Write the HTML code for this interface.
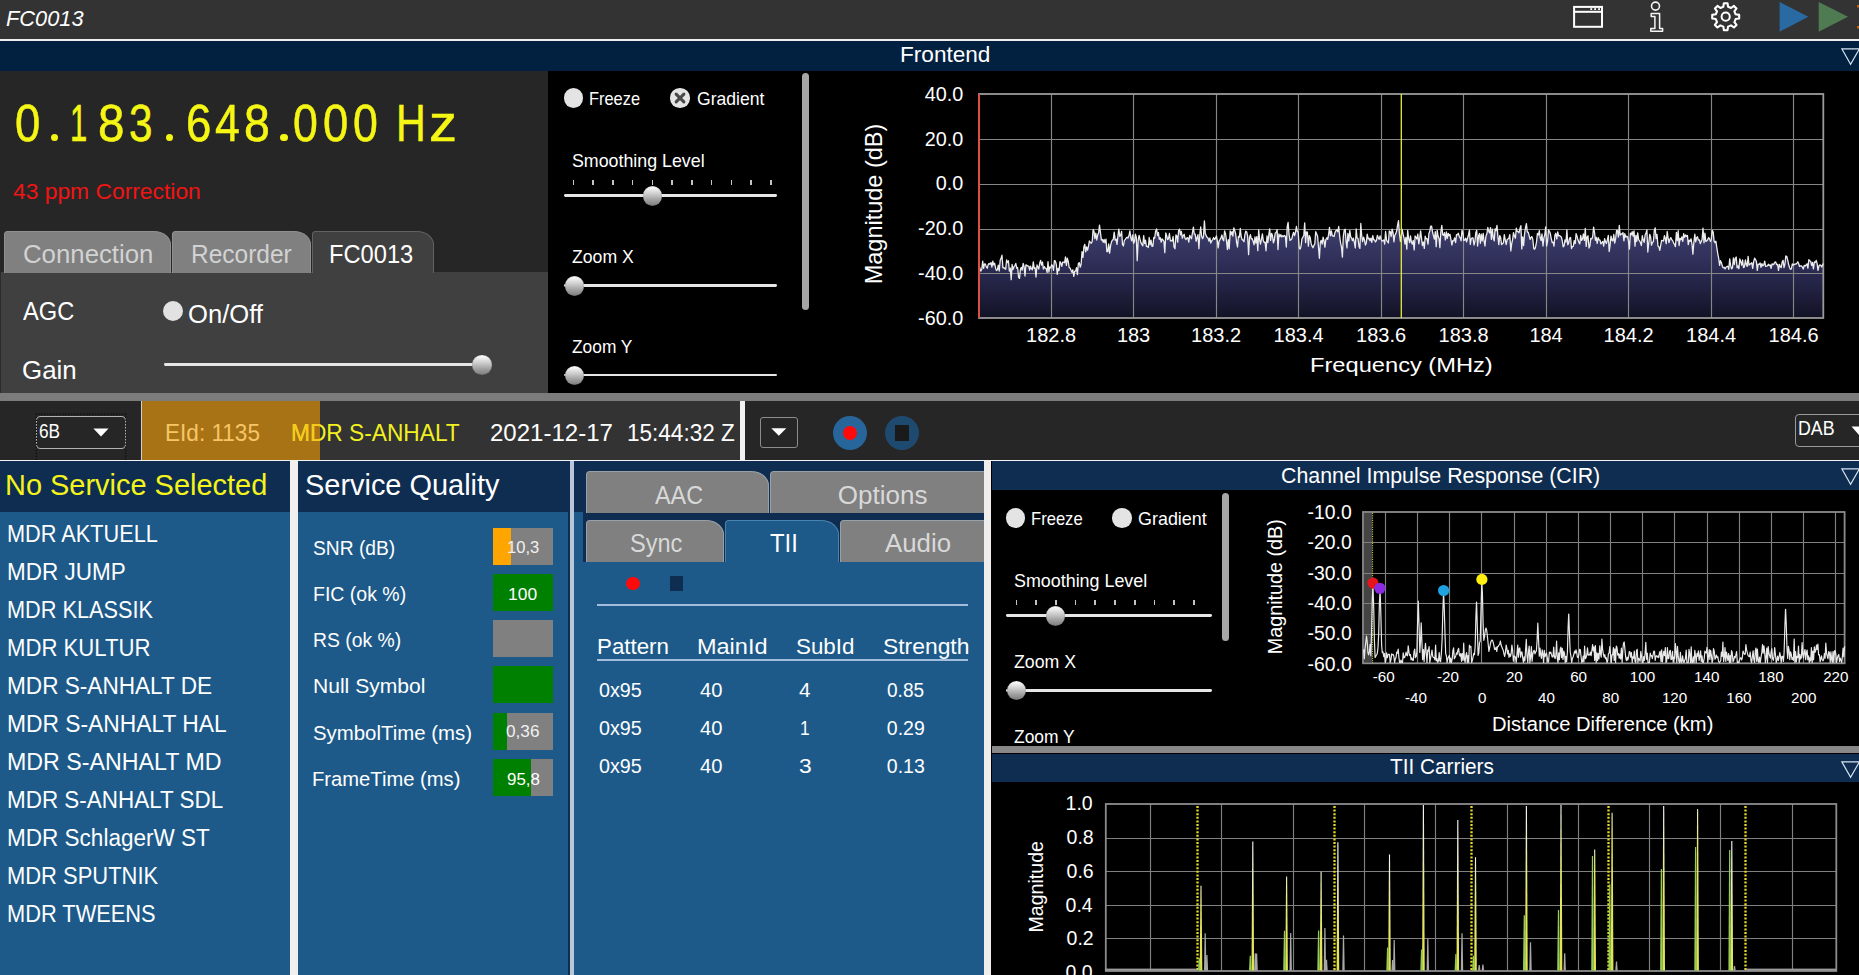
<!DOCTYPE html>
<html><head><meta charset="utf-8"><title>FC0013</title>
<style>
html,body{margin:0;padding:0;background:#000;overflow:hidden;}
body{width:1859px;height:975px;position:relative;font-family:"Liberation Sans", sans-serif;}
#app{position:absolute;left:0;top:0;width:1859px;height:975px;overflow:hidden;background:#000;}
.r{position:absolute;display:block;}
.t{position:absolute;white-space:pre;line-height:1;transform-origin:0 0;font-family:"Liberation Sans", sans-serif;}
.dg{-webkit-text-stroke:0.55px #f6f615;}
</style></head>
<body><div id="app">
<!-- layout -->
<div class="r" style="left:0px;top:0px;width:1859px;height:39.3px;background:#333333;"></div>
<div class="r" style="left:0px;top:39.3px;width:1859px;height:1.9px;background:#eeeeee;"></div>
<div class="r" style="left:0px;top:41.2px;width:1859px;height:29.4px;background:#02203f;"></div>
<div class="r" style="left:0px;top:70.6px;width:548.3px;height:202px;background:#262626;"></div>
<div class="r" style="left:0px;top:272.3px;width:548.3px;height:121px;background:#404040;"></div>
<div class="r" style="left:0px;top:393.2px;width:1859px;height:7.4px;background:#7c7c7c;"></div>
<div class="r" style="left:0px;top:400.6px;width:141.2px;height:59px;background:#262626;"></div>
<div class="r" style="left:141.2px;top:400.6px;width:178.6px;height:59px;background:#a87315;"></div>
<div class="r" style="left:319.8px;top:400.6px;width:420.4px;height:59px;background:#333333;"></div>
<div class="r" style="left:740.2px;top:400.6px;width:5.2px;height:59px;background:#f2f2f2;"></div>
<div class="r" style="left:745.4px;top:400.6px;width:1113.6px;height:59px;background:#262626;"></div>
<div class="r" style="left:0px;top:459.6px;width:1859px;height:1.6px;background:#f2f2f2;"></div>
<div class="r" style="left:0px;top:461.2px;width:290.3px;height:513.8px;background:#1d5a8a;"></div>
<div class="r" style="left:0px;top:461.2px;width:290.3px;height:50.4px;background:#0f2d50;"></div>
<div class="r" style="left:290.3px;top:461.2px;width:7.7px;height:513.8px;background:#f1f0ee;"></div>
<div class="r" style="left:298px;top:461.2px;width:272px;height:513.8px;background:#1d5a8a;"></div>
<div class="r" style="left:298px;top:461.2px;width:272px;height:50.4px;background:#0f2d50;"></div>
<div class="r" style="left:567.9px;top:461.2px;width:2.1px;height:513.8px;background:#0f2d50;"></div>
<div class="r" style="left:570px;top:461.2px;width:4px;height:513.8px;background:#bcc6da;"></div>
<div class="r" style="left:574px;top:461.2px;width:409.7px;height:513.8px;background:#1d5a8a;"></div>
<div class="r" style="left:574px;top:461.2px;width:409.7px;height:50.6px;background:#0f2d50;"></div>
<div class="r" style="left:583px;top:511.8px;width:400.7px;height:50px;background:#0f2d50;"></div>
<div class="r" style="left:983.7px;top:461.2px;width:7.8px;height:513.8px;background:#f0eeec;"></div>
<div class="r" style="left:991.5px;top:461.2px;width:867.5px;height:29.3px;background:#0f2d50;"></div>
<div class="r" style="left:991.5px;top:746.3px;width:867.5px;height:7.2px;background:#888888;"></div>
<div class="r" style="left:991.5px;top:753.5px;width:867.5px;height:28.8px;background:#0f2d50;"></div>
<!-- charts -->
<svg class="r" style="left:0;top:0" width="1859" height="400" viewBox="0 0 1859 400">
<defs><linearGradient id="sg" gradientUnits="userSpaceOnUse" x1="0" y1="228" x2="0" y2="318"><stop offset="0" stop-color="#3e3e6e"/><stop offset="0.45" stop-color="#2c2c54"/><stop offset="1" stop-color="#121226"/></linearGradient></defs>
<polygon points="979.0,318.0 979.0,265.7 979.9,268.2 980.8,271.1 981.8,269.3 982.7,261.1 983.6,268.4 984.5,263.8 985.4,264.2 986.4,267.1 987.3,268.2 988.2,264.7 989.1,263.4 990.0,264.2 991.0,262.5 991.9,267.1 992.8,261.2 993.7,264.9 994.6,263.2 995.6,268.2 996.5,270.5 997.4,269.8 998.3,265.2 999.2,271.0 1000.2,260.2 1001.1,258.0 1002.0,255.2 1002.9,267.8 1003.8,267.5 1004.8,268.7 1005.7,269.2 1006.6,260.0 1007.5,262.6 1008.4,260.8 1009.4,271.1 1010.3,268.2 1011.2,279.6 1012.1,264.5 1013.0,269.6 1014.0,266.8 1014.9,265.5 1015.8,263.4 1016.7,268.1 1017.6,267.5 1018.6,277.3 1019.5,278.4 1020.4,269.5 1021.3,267.3 1022.2,270.2 1023.2,263.4 1024.1,266.7 1025.0,276.0 1025.9,264.9 1026.8,265.4 1027.8,266.1 1028.7,266.2 1029.6,270.0 1030.5,266.2 1031.4,268.8 1032.4,269.7 1033.3,261.9 1034.2,268.4 1035.1,267.6 1036.0,277.0 1037.0,265.0 1037.9,267.0 1038.8,269.1 1039.7,263.4 1040.6,260.4 1041.6,265.1 1042.5,262.0 1043.4,269.1 1044.3,266.6 1045.2,268.1 1046.2,268.5 1047.1,272.4 1048.0,261.7 1048.9,272.0 1049.8,267.0 1050.8,267.9 1051.7,264.7 1052.6,265.9 1053.5,270.3 1054.4,260.6 1055.4,261.1 1056.3,264.5 1057.2,274.3 1058.1,268.4 1059.0,270.7 1060.0,261.6 1060.9,263.1 1061.8,266.3 1062.7,262.2 1063.6,262.2 1064.6,262.7 1065.5,256.9 1066.4,265.4 1067.3,258.1 1068.2,261.2 1069.2,267.7 1070.1,268.1 1071.0,270.3 1071.9,272.3 1072.8,269.8 1073.8,276.3 1074.7,271.1 1075.6,271.1 1076.5,267.6 1077.4,274.5 1078.4,263.3 1079.3,262.7 1080.2,267.2 1081.1,264.5 1082.0,251.7 1083.0,257.4 1083.9,246.8 1084.8,244.3 1085.7,251.8 1086.6,246.8 1087.6,250.2 1088.5,246.2 1089.4,240.9 1090.3,242.4 1091.2,243.3 1092.2,241.5 1093.1,229.5 1094.0,231.4 1094.9,238.7 1095.8,233.2 1096.8,240.0 1097.7,234.9 1098.6,233.0 1099.5,225.1 1100.4,232.1 1101.4,240.1 1102.3,239.4 1103.2,242.3 1104.1,239.4 1105.0,242.9 1106.0,239.2 1106.9,251.6 1107.8,251.7 1108.7,243.9 1109.6,253.2 1110.6,245.4 1111.5,241.8 1112.4,240.1 1113.3,239.5 1114.2,232.2 1115.2,240.2 1116.1,239.1 1117.0,244.4 1117.9,236.2 1118.8,229.2 1119.8,236.4 1120.7,235.4 1121.6,231.3 1122.5,244.4 1123.4,246.0 1124.4,240.4 1125.3,239.4 1126.2,238.1 1127.1,237.3 1128.0,238.1 1129.0,235.5 1129.9,230.8 1130.8,237.9 1131.7,240.9 1132.6,234.9 1133.6,243.3 1134.5,241.4 1135.4,234.1 1136.3,237.1 1137.2,260.7 1138.2,240.0 1139.1,235.5 1140.0,239.2 1140.9,242.6 1141.8,244.3 1142.8,245.9 1143.7,235.6 1144.6,243.6 1145.5,240.1 1146.4,246.3 1147.4,246.4 1148.3,247.5 1149.2,237.5 1150.1,244.8 1151.0,240.1 1152.0,246.4 1152.9,246.1 1153.8,237.3 1154.7,238.1 1155.6,231.2 1156.6,228.9 1157.5,235.5 1158.4,232.5 1159.3,239.3 1160.2,237.6 1161.2,242.0 1162.1,238.8 1163.0,240.0 1163.9,241.3 1164.8,252.7 1165.8,233.0 1166.7,235.9 1167.6,239.6 1168.5,238.7 1169.4,233.5 1170.4,240.8 1171.3,240.5 1172.2,241.1 1173.1,236.5 1174.0,246.9 1175.0,248.8 1175.9,235.0 1176.8,236.0 1177.7,242.1 1178.6,230.7 1179.6,229.1 1180.5,234.9 1181.4,231.5 1182.3,238.2 1183.2,235.7 1184.2,234.3 1185.1,238.6 1186.0,239.5 1186.9,237.9 1187.8,237.7 1188.8,242.1 1189.7,235.4 1190.6,237.1 1191.5,238.8 1192.4,232.8 1193.4,227.2 1194.3,234.0 1195.2,234.1 1196.1,241.2 1197.0,238.0 1198.0,234.7 1198.9,248.6 1199.8,234.7 1200.7,227.0 1201.6,236.2 1202.6,238.7 1203.5,236.3 1204.4,220.8 1205.3,233.6 1206.2,235.6 1207.2,237.5 1208.1,238.1 1209.0,241.2 1209.9,237.9 1210.8,243.1 1211.8,240.8 1212.7,239.5 1213.6,237.5 1214.5,239.4 1215.4,238.6 1216.4,235.9 1217.3,240.6 1218.2,247.9 1219.1,241.1 1220.0,239.6 1221.0,237.8 1221.9,235.0 1222.8,239.4 1223.7,240.7 1224.6,230.9 1225.6,234.0 1226.5,240.9 1227.4,249.5 1228.3,239.6 1229.2,248.8 1230.2,230.8 1231.1,234.6 1232.0,231.7 1232.9,236.0 1233.8,227.8 1234.8,230.8 1235.7,234.0 1236.6,242.4 1237.5,247.0 1238.4,236.4 1239.4,237.1 1240.3,228.5 1241.2,236.7 1242.1,239.6 1243.0,240.1 1244.0,241.7 1244.9,234.6 1245.8,231.2 1246.7,232.0 1247.6,235.9 1248.6,254.6 1249.5,237.6 1250.4,234.7 1251.3,238.8 1252.2,238.6 1253.2,241.5 1254.1,244.8 1255.0,236.8 1255.9,243.0 1256.8,236.6 1257.8,250.6 1258.7,229.9 1259.6,239.6 1260.5,244.0 1261.4,239.5 1262.4,233.9 1263.3,240.6 1264.2,242.5 1265.1,242.1 1266.0,250.8 1267.0,236.0 1267.9,242.5 1268.8,234.7 1269.7,228.8 1270.6,240.4 1271.6,233.3 1272.5,235.7 1273.4,242.8 1274.3,240.2 1275.2,233.0 1276.2,232.5 1277.1,229.6 1278.0,249.5 1278.9,233.9 1279.8,236.6 1280.8,234.7 1281.7,236.9 1282.6,235.7 1283.5,236.6 1284.4,235.4 1285.4,236.5 1286.3,247.0 1287.2,226.9 1288.1,222.4 1289.0,234.0 1290.0,240.4 1290.9,239.7 1291.8,238.8 1292.7,235.0 1293.6,232.3 1294.6,235.7 1295.5,232.3 1296.4,226.5 1297.3,231.4 1298.2,232.1 1299.2,247.8 1300.1,249.0 1301.0,246.3 1301.9,238.9 1302.8,237.4 1303.8,235.5 1304.7,222.9 1305.6,242.6 1306.5,231.8 1307.4,232.2 1308.4,246.1 1309.3,235.6 1310.2,237.6 1311.1,243.4 1312.0,246.1 1313.0,247.7 1313.9,245.4 1314.8,243.9 1315.7,231.7 1316.6,233.8 1317.6,236.2 1318.5,247.2 1319.4,258.3 1320.3,242.5 1321.2,240.3 1322.2,244.0 1323.1,237.1 1324.0,240.7 1324.9,247.1 1325.8,239.8 1326.8,237.9 1327.7,239.3 1328.6,234.3 1329.5,227.3 1330.4,235.8 1331.4,230.8 1332.3,235.9 1333.2,236.0 1334.1,236.5 1335.0,232.4 1336.0,230.6 1336.9,229.8 1337.8,231.9 1338.7,226.5 1339.6,235.8 1340.6,243.1 1341.5,247.1 1342.4,257.2 1343.3,236.7 1344.2,230.3 1345.2,229.3 1346.1,241.6 1347.0,247.9 1347.9,233.5 1348.8,241.0 1349.8,230.5 1350.7,236.9 1351.6,238.0 1352.5,240.7 1353.4,238.2 1354.4,242.6 1355.3,247.9 1356.2,229.0 1357.1,238.0 1358.0,238.4 1359.0,246.5 1359.9,248.4 1360.8,223.5 1361.7,235.6 1362.6,241.6 1363.6,237.2 1364.5,240.1 1365.4,245.0 1366.3,242.9 1367.2,234.2 1368.2,238.9 1369.1,238.2 1370.0,240.7 1370.9,238.2 1371.8,242.4 1372.8,235.6 1373.7,239.9 1374.6,240.0 1375.5,242.0 1376.4,240.7 1377.4,235.3 1378.3,237.9 1379.2,239.3 1380.1,235.8 1381.0,239.2 1382.0,241.1 1382.9,240.6 1383.8,239.9 1384.7,244.0 1385.6,231.5 1386.6,240.4 1387.5,241.7 1388.4,243.0 1389.3,231.0 1390.2,231.6 1391.2,236.5 1392.1,229.1 1393.0,232.1 1393.9,241.8 1394.8,235.4 1395.8,233.6 1396.7,230.8 1397.6,225.2 1398.5,220.6 1399.4,233.4 1400.4,241.3 1401.3,235.6 1402.2,229.5 1403.1,234.3 1404.0,237.8 1405.0,244.0 1405.9,237.4 1406.8,249.1 1407.7,230.4 1408.6,238.6 1409.6,242.6 1410.5,235.9 1411.4,242.2 1412.3,244.1 1413.2,240.4 1414.2,249.9 1415.1,236.0 1416.0,237.3 1416.9,239.0 1417.8,234.1 1418.8,243.8 1419.7,238.5 1420.6,230.9 1421.5,238.2 1422.4,245.5 1423.4,242.0 1424.3,248.4 1425.2,236.2 1426.1,238.7 1427.0,238.7 1428.0,244.2 1428.9,233.7 1429.8,230.9 1430.7,226.2 1431.6,226.2 1432.6,232.5 1433.5,235.9 1434.4,239.1 1435.3,231.6 1436.2,246.7 1437.2,230.3 1438.1,236.3 1439.0,238.4 1439.9,247.6 1440.8,232.0 1441.8,225.3 1442.7,234.8 1443.6,235.4 1444.5,232.7 1445.4,239.8 1446.4,232.0 1447.3,238.4 1448.2,233.3 1449.1,235.7 1450.0,234.4 1451.0,239.8 1451.9,245.0 1452.8,240.7 1453.7,240.9 1454.6,237.9 1455.6,242.6 1456.5,234.6 1457.4,234.8 1458.3,233.2 1459.2,236.4 1460.2,237.9 1461.1,240.8 1462.0,230.1 1462.9,232.9 1463.8,240.5 1464.8,240.1 1465.7,238.2 1466.6,241.9 1467.5,238.5 1468.4,235.3 1469.4,230.1 1470.3,244.3 1471.2,238.9 1472.1,238.0 1473.0,237.8 1474.0,245.0 1474.9,241.4 1475.8,232.7 1476.7,230.3 1477.6,246.0 1478.6,235.7 1479.5,233.6 1480.4,243.3 1481.3,234.2 1482.2,240.9 1483.2,233.3 1484.1,241.3 1485.0,246.0 1485.9,236.3 1486.8,234.1 1487.8,227.5 1488.7,231.2 1489.6,233.0 1490.5,227.6 1491.4,239.4 1492.4,229.1 1493.3,238.0 1494.2,240.9 1495.1,228.9 1496.0,230.6 1497.0,225.5 1497.9,236.6 1498.8,244.6 1499.7,235.6 1500.6,237.4 1501.6,244.6 1502.5,243.5 1503.4,243.0 1504.3,234.6 1505.2,239.6 1506.2,244.5 1507.1,239.8 1508.0,238.9 1508.9,238.2 1509.8,234.6 1510.8,250.9 1511.7,243.6 1512.6,239.6 1513.5,232.7 1514.4,236.0 1515.4,238.2 1516.3,228.2 1517.2,231.4 1518.1,231.7 1519.0,232.9 1520.0,228.4 1520.9,225.6 1521.8,248.9 1522.7,236.9 1523.6,245.7 1524.6,233.3 1525.5,227.7 1526.4,223.6 1527.3,232.0 1528.2,232.2 1529.2,235.9 1530.1,239.4 1531.0,237.4 1531.9,236.6 1532.8,239.2 1533.8,248.8 1534.7,249.3 1535.6,246.7 1536.5,242.1 1537.4,233.5 1538.4,235.0 1539.3,230.7 1540.2,237.8 1541.1,240.6 1542.0,233.8 1543.0,246.0 1543.9,237.9 1544.8,234.6 1545.7,226.9 1546.6,246.0 1547.6,240.9 1548.5,229.8 1549.4,231.4 1550.3,233.6 1551.2,238.5 1552.2,242.5 1553.1,242.2 1554.0,246.2 1554.9,235.2 1555.8,233.3 1556.8,238.9 1557.7,231.9 1558.6,235.8 1559.5,235.5 1560.4,236.2 1561.4,237.2 1562.3,241.0 1563.2,246.9 1564.1,245.8 1565.0,239.8 1566.0,242.1 1566.9,229.8 1567.8,244.8 1568.7,243.1 1569.6,238.0 1570.6,237.5 1571.5,248.6 1572.4,246.6 1573.3,246.4 1574.2,240.6 1575.2,243.7 1576.1,233.6 1577.0,236.2 1577.9,239.8 1578.8,242.1 1579.8,243.9 1580.7,235.4 1581.6,240.4 1582.5,239.2 1583.4,233.8 1584.4,240.4 1585.3,228.4 1586.2,246.4 1587.1,237.0 1588.0,235.8 1589.0,248.0 1589.9,245.9 1590.8,238.3 1591.7,238.9 1592.6,237.3 1593.6,227.1 1594.5,232.3 1595.4,240.3 1596.3,237.3 1597.2,243.4 1598.2,237.7 1599.1,239.8 1600.0,240.2 1600.9,243.8 1601.8,242.6 1602.8,241.5 1603.7,246.2 1604.6,238.7 1605.5,241.6 1606.4,243.5 1607.4,239.8 1608.3,235.4 1609.2,251.5 1610.1,245.1 1611.0,236.1 1612.0,240.3 1612.9,240.9 1613.8,234.5 1614.7,243.1 1615.6,238.9 1616.6,230.4 1617.5,230.9 1618.4,237.0 1619.3,225.5 1620.2,235.2 1621.2,233.8 1622.1,234.2 1623.0,232.5 1623.9,240.8 1624.8,233.7 1625.8,237.2 1626.7,236.2 1627.6,236.8 1628.5,241.1 1629.4,249.2 1630.4,233.1 1631.3,234.8 1632.2,231.7 1633.1,236.1 1634.0,230.9 1635.0,246.1 1635.9,235.3 1636.8,241.3 1637.7,232.9 1638.6,239.6 1639.6,240.8 1640.5,242.8 1641.4,245.5 1642.3,235.7 1643.2,240.1 1644.2,242.3 1645.1,235.0 1646.0,232.9 1646.9,229.9 1647.8,252.0 1648.8,242.8 1649.7,234.3 1650.6,236.9 1651.5,245.2 1652.4,242.4 1653.4,241.6 1654.3,230.5 1655.2,227.9 1656.1,238.5 1657.0,234.5 1658.0,246.2 1658.9,246.8 1659.8,250.4 1660.7,245.2 1661.6,240.4 1662.6,240.7 1663.5,241.0 1664.4,235.6 1665.3,238.3 1666.2,243.6 1667.2,231.5 1668.1,237.9 1669.0,242.6 1669.9,239.2 1670.8,237.6 1671.8,239.7 1672.7,240.6 1673.6,243.1 1674.5,244.3 1675.4,246.7 1676.4,232.3 1677.3,240.6 1678.2,230.7 1679.1,245.5 1680.0,238.3 1681.0,239.7 1681.9,236.8 1682.8,241.3 1683.7,233.6 1684.6,237.3 1685.6,234.9 1686.5,236.4 1687.4,235.4 1688.3,244.7 1689.2,240.1 1690.2,241.2 1691.1,238.8 1692.0,244.0 1692.9,254.1 1693.8,243.1 1694.8,234.2 1695.7,241.8 1696.6,237.8 1697.5,236.8 1698.4,240.1 1699.4,239.9 1700.3,243.6 1701.2,241.5 1702.1,239.2 1703.0,228.2 1704.0,242.8 1704.9,233.1 1705.8,241.4 1706.7,241.0 1707.6,239.9 1708.6,237.6 1709.5,238.6 1710.4,241.4 1711.3,239.4 1712.2,230.4 1713.2,232.1 1714.1,241.4 1715.0,242.7 1715.9,241.2 1716.8,247.5 1717.8,253.9 1718.7,258.4 1719.6,265.3 1720.5,260.7 1721.4,262.8 1722.4,266.3 1723.3,267.8 1724.2,267.3 1725.1,269.0 1726.0,267.2 1727.0,266.5 1727.9,266.2 1728.8,269.3 1729.7,258.9 1730.6,265.4 1731.6,268.8 1732.5,267.8 1733.4,257.8 1734.3,264.5 1735.2,258.7 1736.2,257.0 1737.1,267.8 1738.0,265.9 1738.9,268.7 1739.8,258.9 1740.8,261.7 1741.7,265.2 1742.6,260.0 1743.5,267.5 1744.4,267.0 1745.4,260.0 1746.3,264.5 1747.2,266.4 1748.1,256.3 1749.0,265.1 1750.0,264.1 1750.9,263.7 1751.8,262.8 1752.7,268.4 1753.6,261.9 1754.6,258.1 1755.5,259.6 1756.4,261.6 1757.3,270.4 1758.2,264.2 1759.2,264.4 1760.1,263.0 1761.0,267.3 1761.9,263.6 1762.8,265.9 1763.8,264.8 1764.7,261.1 1765.6,266.3 1766.5,266.1 1767.4,265.8 1768.4,264.3 1769.3,265.5 1770.2,264.9 1771.1,268.4 1772.0,263.9 1773.0,264.6 1773.9,264.1 1774.8,262.3 1775.7,261.9 1776.6,264.7 1777.6,264.3 1778.5,270.4 1779.4,264.3 1780.3,266.7 1781.2,267.5 1782.2,261.8 1783.1,260.3 1784.0,267.7 1784.9,264.2 1785.8,256.0 1786.8,256.3 1787.7,260.2 1788.6,264.2 1789.5,267.3 1790.4,269.3 1791.4,269.0 1792.3,263.8 1793.2,265.1 1794.1,264.7 1795.0,263.9 1796.0,264.2 1796.9,263.1 1797.8,261.8 1798.7,263.7 1799.6,266.5 1800.6,265.9 1801.5,265.9 1802.4,267.1 1803.3,269.0 1804.2,265.3 1805.2,266.0 1806.1,265.0 1807.0,263.8 1807.9,268.2 1808.8,259.7 1809.8,260.7 1810.7,261.4 1811.6,265.3 1812.5,262.4 1813.4,268.8 1814.4,261.9 1815.3,262.4 1816.2,260.4 1817.1,263.4 1818.0,270.4 1819.0,265.8 1819.9,265.0 1820.8,265.2 1821.7,267.0 1823.3,263.5 1823.3,318.0" fill="url(#sg)"/>
<line x1="1051.5" y1="94.0" x2="1051.5" y2="318.0" stroke="#868686" stroke-width="1.15"/>
<line x1="1133.5" y1="94.0" x2="1133.5" y2="318.0" stroke="#868686" stroke-width="1.15"/>
<line x1="1216.5" y1="94.0" x2="1216.5" y2="318.0" stroke="#868686" stroke-width="1.15"/>
<line x1="1298.5" y1="94.0" x2="1298.5" y2="318.0" stroke="#868686" stroke-width="1.15"/>
<line x1="1381.5" y1="94.0" x2="1381.5" y2="318.0" stroke="#868686" stroke-width="1.15"/>
<line x1="1463.5" y1="94.0" x2="1463.5" y2="318.0" stroke="#868686" stroke-width="1.15"/>
<line x1="1546.5" y1="94.0" x2="1546.5" y2="318.0" stroke="#868686" stroke-width="1.15"/>
<line x1="1628.5" y1="94.0" x2="1628.5" y2="318.0" stroke="#868686" stroke-width="1.15"/>
<line x1="1711.5" y1="94.0" x2="1711.5" y2="318.0" stroke="#868686" stroke-width="1.15"/>
<line x1="1793.5" y1="94.0" x2="1793.5" y2="318.0" stroke="#868686" stroke-width="1.15"/>
<line x1="979.0" y1="139.5" x2="1823.3" y2="139.5" stroke="#868686" stroke-width="1.15"/>
<line x1="979.0" y1="184.5" x2="1823.3" y2="184.5" stroke="#868686" stroke-width="1.15"/>
<line x1="979.0" y1="229.5" x2="1823.3" y2="229.5" stroke="#868686" stroke-width="1.15"/>
<line x1="979.0" y1="273.5" x2="1823.3" y2="273.5" stroke="#868686" stroke-width="1.15"/>
<rect x="979.0" y="94.0" width="844.3" height="224.0" fill="none" stroke="#9a9a9a" stroke-width="1.8"/>
<polyline points="979.0,265.7 979.9,268.2 980.8,271.1 981.8,269.3 982.7,261.1 983.6,268.4 984.5,263.8 985.4,264.2 986.4,267.1 987.3,268.2 988.2,264.7 989.1,263.4 990.0,264.2 991.0,262.5 991.9,267.1 992.8,261.2 993.7,264.9 994.6,263.2 995.6,268.2 996.5,270.5 997.4,269.8 998.3,265.2 999.2,271.0 1000.2,260.2 1001.1,258.0 1002.0,255.2 1002.9,267.8 1003.8,267.5 1004.8,268.7 1005.7,269.2 1006.6,260.0 1007.5,262.6 1008.4,260.8 1009.4,271.1 1010.3,268.2 1011.2,279.6 1012.1,264.5 1013.0,269.6 1014.0,266.8 1014.9,265.5 1015.8,263.4 1016.7,268.1 1017.6,267.5 1018.6,277.3 1019.5,278.4 1020.4,269.5 1021.3,267.3 1022.2,270.2 1023.2,263.4 1024.1,266.7 1025.0,276.0 1025.9,264.9 1026.8,265.4 1027.8,266.1 1028.7,266.2 1029.6,270.0 1030.5,266.2 1031.4,268.8 1032.4,269.7 1033.3,261.9 1034.2,268.4 1035.1,267.6 1036.0,277.0 1037.0,265.0 1037.9,267.0 1038.8,269.1 1039.7,263.4 1040.6,260.4 1041.6,265.1 1042.5,262.0 1043.4,269.1 1044.3,266.6 1045.2,268.1 1046.2,268.5 1047.1,272.4 1048.0,261.7 1048.9,272.0 1049.8,267.0 1050.8,267.9 1051.7,264.7 1052.6,265.9 1053.5,270.3 1054.4,260.6 1055.4,261.1 1056.3,264.5 1057.2,274.3 1058.1,268.4 1059.0,270.7 1060.0,261.6 1060.9,263.1 1061.8,266.3 1062.7,262.2 1063.6,262.2 1064.6,262.7 1065.5,256.9 1066.4,265.4 1067.3,258.1 1068.2,261.2 1069.2,267.7 1070.1,268.1 1071.0,270.3 1071.9,272.3 1072.8,269.8 1073.8,276.3 1074.7,271.1 1075.6,271.1 1076.5,267.6 1077.4,274.5 1078.4,263.3 1079.3,262.7 1080.2,267.2 1081.1,264.5 1082.0,251.7 1083.0,257.4 1083.9,246.8 1084.8,244.3 1085.7,251.8 1086.6,246.8 1087.6,250.2 1088.5,246.2 1089.4,240.9 1090.3,242.4 1091.2,243.3 1092.2,241.5 1093.1,229.5 1094.0,231.4 1094.9,238.7 1095.8,233.2 1096.8,240.0 1097.7,234.9 1098.6,233.0 1099.5,225.1 1100.4,232.1 1101.4,240.1 1102.3,239.4 1103.2,242.3 1104.1,239.4 1105.0,242.9 1106.0,239.2 1106.9,251.6 1107.8,251.7 1108.7,243.9 1109.6,253.2 1110.6,245.4 1111.5,241.8 1112.4,240.1 1113.3,239.5 1114.2,232.2 1115.2,240.2 1116.1,239.1 1117.0,244.4 1117.9,236.2 1118.8,229.2 1119.8,236.4 1120.7,235.4 1121.6,231.3 1122.5,244.4 1123.4,246.0 1124.4,240.4 1125.3,239.4 1126.2,238.1 1127.1,237.3 1128.0,238.1 1129.0,235.5 1129.9,230.8 1130.8,237.9 1131.7,240.9 1132.6,234.9 1133.6,243.3 1134.5,241.4 1135.4,234.1 1136.3,237.1 1137.2,260.7 1138.2,240.0 1139.1,235.5 1140.0,239.2 1140.9,242.6 1141.8,244.3 1142.8,245.9 1143.7,235.6 1144.6,243.6 1145.5,240.1 1146.4,246.3 1147.4,246.4 1148.3,247.5 1149.2,237.5 1150.1,244.8 1151.0,240.1 1152.0,246.4 1152.9,246.1 1153.8,237.3 1154.7,238.1 1155.6,231.2 1156.6,228.9 1157.5,235.5 1158.4,232.5 1159.3,239.3 1160.2,237.6 1161.2,242.0 1162.1,238.8 1163.0,240.0 1163.9,241.3 1164.8,252.7 1165.8,233.0 1166.7,235.9 1167.6,239.6 1168.5,238.7 1169.4,233.5 1170.4,240.8 1171.3,240.5 1172.2,241.1 1173.1,236.5 1174.0,246.9 1175.0,248.8 1175.9,235.0 1176.8,236.0 1177.7,242.1 1178.6,230.7 1179.6,229.1 1180.5,234.9 1181.4,231.5 1182.3,238.2 1183.2,235.7 1184.2,234.3 1185.1,238.6 1186.0,239.5 1186.9,237.9 1187.8,237.7 1188.8,242.1 1189.7,235.4 1190.6,237.1 1191.5,238.8 1192.4,232.8 1193.4,227.2 1194.3,234.0 1195.2,234.1 1196.1,241.2 1197.0,238.0 1198.0,234.7 1198.9,248.6 1199.8,234.7 1200.7,227.0 1201.6,236.2 1202.6,238.7 1203.5,236.3 1204.4,220.8 1205.3,233.6 1206.2,235.6 1207.2,237.5 1208.1,238.1 1209.0,241.2 1209.9,237.9 1210.8,243.1 1211.8,240.8 1212.7,239.5 1213.6,237.5 1214.5,239.4 1215.4,238.6 1216.4,235.9 1217.3,240.6 1218.2,247.9 1219.1,241.1 1220.0,239.6 1221.0,237.8 1221.9,235.0 1222.8,239.4 1223.7,240.7 1224.6,230.9 1225.6,234.0 1226.5,240.9 1227.4,249.5 1228.3,239.6 1229.2,248.8 1230.2,230.8 1231.1,234.6 1232.0,231.7 1232.9,236.0 1233.8,227.8 1234.8,230.8 1235.7,234.0 1236.6,242.4 1237.5,247.0 1238.4,236.4 1239.4,237.1 1240.3,228.5 1241.2,236.7 1242.1,239.6 1243.0,240.1 1244.0,241.7 1244.9,234.6 1245.8,231.2 1246.7,232.0 1247.6,235.9 1248.6,254.6 1249.5,237.6 1250.4,234.7 1251.3,238.8 1252.2,238.6 1253.2,241.5 1254.1,244.8 1255.0,236.8 1255.9,243.0 1256.8,236.6 1257.8,250.6 1258.7,229.9 1259.6,239.6 1260.5,244.0 1261.4,239.5 1262.4,233.9 1263.3,240.6 1264.2,242.5 1265.1,242.1 1266.0,250.8 1267.0,236.0 1267.9,242.5 1268.8,234.7 1269.7,228.8 1270.6,240.4 1271.6,233.3 1272.5,235.7 1273.4,242.8 1274.3,240.2 1275.2,233.0 1276.2,232.5 1277.1,229.6 1278.0,249.5 1278.9,233.9 1279.8,236.6 1280.8,234.7 1281.7,236.9 1282.6,235.7 1283.5,236.6 1284.4,235.4 1285.4,236.5 1286.3,247.0 1287.2,226.9 1288.1,222.4 1289.0,234.0 1290.0,240.4 1290.9,239.7 1291.8,238.8 1292.7,235.0 1293.6,232.3 1294.6,235.7 1295.5,232.3 1296.4,226.5 1297.3,231.4 1298.2,232.1 1299.2,247.8 1300.1,249.0 1301.0,246.3 1301.9,238.9 1302.8,237.4 1303.8,235.5 1304.7,222.9 1305.6,242.6 1306.5,231.8 1307.4,232.2 1308.4,246.1 1309.3,235.6 1310.2,237.6 1311.1,243.4 1312.0,246.1 1313.0,247.7 1313.9,245.4 1314.8,243.9 1315.7,231.7 1316.6,233.8 1317.6,236.2 1318.5,247.2 1319.4,258.3 1320.3,242.5 1321.2,240.3 1322.2,244.0 1323.1,237.1 1324.0,240.7 1324.9,247.1 1325.8,239.8 1326.8,237.9 1327.7,239.3 1328.6,234.3 1329.5,227.3 1330.4,235.8 1331.4,230.8 1332.3,235.9 1333.2,236.0 1334.1,236.5 1335.0,232.4 1336.0,230.6 1336.9,229.8 1337.8,231.9 1338.7,226.5 1339.6,235.8 1340.6,243.1 1341.5,247.1 1342.4,257.2 1343.3,236.7 1344.2,230.3 1345.2,229.3 1346.1,241.6 1347.0,247.9 1347.9,233.5 1348.8,241.0 1349.8,230.5 1350.7,236.9 1351.6,238.0 1352.5,240.7 1353.4,238.2 1354.4,242.6 1355.3,247.9 1356.2,229.0 1357.1,238.0 1358.0,238.4 1359.0,246.5 1359.9,248.4 1360.8,223.5 1361.7,235.6 1362.6,241.6 1363.6,237.2 1364.5,240.1 1365.4,245.0 1366.3,242.9 1367.2,234.2 1368.2,238.9 1369.1,238.2 1370.0,240.7 1370.9,238.2 1371.8,242.4 1372.8,235.6 1373.7,239.9 1374.6,240.0 1375.5,242.0 1376.4,240.7 1377.4,235.3 1378.3,237.9 1379.2,239.3 1380.1,235.8 1381.0,239.2 1382.0,241.1 1382.9,240.6 1383.8,239.9 1384.7,244.0 1385.6,231.5 1386.6,240.4 1387.5,241.7 1388.4,243.0 1389.3,231.0 1390.2,231.6 1391.2,236.5 1392.1,229.1 1393.0,232.1 1393.9,241.8 1394.8,235.4 1395.8,233.6 1396.7,230.8 1397.6,225.2 1398.5,220.6 1399.4,233.4 1400.4,241.3 1401.3,235.6 1402.2,229.5 1403.1,234.3 1404.0,237.8 1405.0,244.0 1405.9,237.4 1406.8,249.1 1407.7,230.4 1408.6,238.6 1409.6,242.6 1410.5,235.9 1411.4,242.2 1412.3,244.1 1413.2,240.4 1414.2,249.9 1415.1,236.0 1416.0,237.3 1416.9,239.0 1417.8,234.1 1418.8,243.8 1419.7,238.5 1420.6,230.9 1421.5,238.2 1422.4,245.5 1423.4,242.0 1424.3,248.4 1425.2,236.2 1426.1,238.7 1427.0,238.7 1428.0,244.2 1428.9,233.7 1429.8,230.9 1430.7,226.2 1431.6,226.2 1432.6,232.5 1433.5,235.9 1434.4,239.1 1435.3,231.6 1436.2,246.7 1437.2,230.3 1438.1,236.3 1439.0,238.4 1439.9,247.6 1440.8,232.0 1441.8,225.3 1442.7,234.8 1443.6,235.4 1444.5,232.7 1445.4,239.8 1446.4,232.0 1447.3,238.4 1448.2,233.3 1449.1,235.7 1450.0,234.4 1451.0,239.8 1451.9,245.0 1452.8,240.7 1453.7,240.9 1454.6,237.9 1455.6,242.6 1456.5,234.6 1457.4,234.8 1458.3,233.2 1459.2,236.4 1460.2,237.9 1461.1,240.8 1462.0,230.1 1462.9,232.9 1463.8,240.5 1464.8,240.1 1465.7,238.2 1466.6,241.9 1467.5,238.5 1468.4,235.3 1469.4,230.1 1470.3,244.3 1471.2,238.9 1472.1,238.0 1473.0,237.8 1474.0,245.0 1474.9,241.4 1475.8,232.7 1476.7,230.3 1477.6,246.0 1478.6,235.7 1479.5,233.6 1480.4,243.3 1481.3,234.2 1482.2,240.9 1483.2,233.3 1484.1,241.3 1485.0,246.0 1485.9,236.3 1486.8,234.1 1487.8,227.5 1488.7,231.2 1489.6,233.0 1490.5,227.6 1491.4,239.4 1492.4,229.1 1493.3,238.0 1494.2,240.9 1495.1,228.9 1496.0,230.6 1497.0,225.5 1497.9,236.6 1498.8,244.6 1499.7,235.6 1500.6,237.4 1501.6,244.6 1502.5,243.5 1503.4,243.0 1504.3,234.6 1505.2,239.6 1506.2,244.5 1507.1,239.8 1508.0,238.9 1508.9,238.2 1509.8,234.6 1510.8,250.9 1511.7,243.6 1512.6,239.6 1513.5,232.7 1514.4,236.0 1515.4,238.2 1516.3,228.2 1517.2,231.4 1518.1,231.7 1519.0,232.9 1520.0,228.4 1520.9,225.6 1521.8,248.9 1522.7,236.9 1523.6,245.7 1524.6,233.3 1525.5,227.7 1526.4,223.6 1527.3,232.0 1528.2,232.2 1529.2,235.9 1530.1,239.4 1531.0,237.4 1531.9,236.6 1532.8,239.2 1533.8,248.8 1534.7,249.3 1535.6,246.7 1536.5,242.1 1537.4,233.5 1538.4,235.0 1539.3,230.7 1540.2,237.8 1541.1,240.6 1542.0,233.8 1543.0,246.0 1543.9,237.9 1544.8,234.6 1545.7,226.9 1546.6,246.0 1547.6,240.9 1548.5,229.8 1549.4,231.4 1550.3,233.6 1551.2,238.5 1552.2,242.5 1553.1,242.2 1554.0,246.2 1554.9,235.2 1555.8,233.3 1556.8,238.9 1557.7,231.9 1558.6,235.8 1559.5,235.5 1560.4,236.2 1561.4,237.2 1562.3,241.0 1563.2,246.9 1564.1,245.8 1565.0,239.8 1566.0,242.1 1566.9,229.8 1567.8,244.8 1568.7,243.1 1569.6,238.0 1570.6,237.5 1571.5,248.6 1572.4,246.6 1573.3,246.4 1574.2,240.6 1575.2,243.7 1576.1,233.6 1577.0,236.2 1577.9,239.8 1578.8,242.1 1579.8,243.9 1580.7,235.4 1581.6,240.4 1582.5,239.2 1583.4,233.8 1584.4,240.4 1585.3,228.4 1586.2,246.4 1587.1,237.0 1588.0,235.8 1589.0,248.0 1589.9,245.9 1590.8,238.3 1591.7,238.9 1592.6,237.3 1593.6,227.1 1594.5,232.3 1595.4,240.3 1596.3,237.3 1597.2,243.4 1598.2,237.7 1599.1,239.8 1600.0,240.2 1600.9,243.8 1601.8,242.6 1602.8,241.5 1603.7,246.2 1604.6,238.7 1605.5,241.6 1606.4,243.5 1607.4,239.8 1608.3,235.4 1609.2,251.5 1610.1,245.1 1611.0,236.1 1612.0,240.3 1612.9,240.9 1613.8,234.5 1614.7,243.1 1615.6,238.9 1616.6,230.4 1617.5,230.9 1618.4,237.0 1619.3,225.5 1620.2,235.2 1621.2,233.8 1622.1,234.2 1623.0,232.5 1623.9,240.8 1624.8,233.7 1625.8,237.2 1626.7,236.2 1627.6,236.8 1628.5,241.1 1629.4,249.2 1630.4,233.1 1631.3,234.8 1632.2,231.7 1633.1,236.1 1634.0,230.9 1635.0,246.1 1635.9,235.3 1636.8,241.3 1637.7,232.9 1638.6,239.6 1639.6,240.8 1640.5,242.8 1641.4,245.5 1642.3,235.7 1643.2,240.1 1644.2,242.3 1645.1,235.0 1646.0,232.9 1646.9,229.9 1647.8,252.0 1648.8,242.8 1649.7,234.3 1650.6,236.9 1651.5,245.2 1652.4,242.4 1653.4,241.6 1654.3,230.5 1655.2,227.9 1656.1,238.5 1657.0,234.5 1658.0,246.2 1658.9,246.8 1659.8,250.4 1660.7,245.2 1661.6,240.4 1662.6,240.7 1663.5,241.0 1664.4,235.6 1665.3,238.3 1666.2,243.6 1667.2,231.5 1668.1,237.9 1669.0,242.6 1669.9,239.2 1670.8,237.6 1671.8,239.7 1672.7,240.6 1673.6,243.1 1674.5,244.3 1675.4,246.7 1676.4,232.3 1677.3,240.6 1678.2,230.7 1679.1,245.5 1680.0,238.3 1681.0,239.7 1681.9,236.8 1682.8,241.3 1683.7,233.6 1684.6,237.3 1685.6,234.9 1686.5,236.4 1687.4,235.4 1688.3,244.7 1689.2,240.1 1690.2,241.2 1691.1,238.8 1692.0,244.0 1692.9,254.1 1693.8,243.1 1694.8,234.2 1695.7,241.8 1696.6,237.8 1697.5,236.8 1698.4,240.1 1699.4,239.9 1700.3,243.6 1701.2,241.5 1702.1,239.2 1703.0,228.2 1704.0,242.8 1704.9,233.1 1705.8,241.4 1706.7,241.0 1707.6,239.9 1708.6,237.6 1709.5,238.6 1710.4,241.4 1711.3,239.4 1712.2,230.4 1713.2,232.1 1714.1,241.4 1715.0,242.7 1715.9,241.2 1716.8,247.5 1717.8,253.9 1718.7,258.4 1719.6,265.3 1720.5,260.7 1721.4,262.8 1722.4,266.3 1723.3,267.8 1724.2,267.3 1725.1,269.0 1726.0,267.2 1727.0,266.5 1727.9,266.2 1728.8,269.3 1729.7,258.9 1730.6,265.4 1731.6,268.8 1732.5,267.8 1733.4,257.8 1734.3,264.5 1735.2,258.7 1736.2,257.0 1737.1,267.8 1738.0,265.9 1738.9,268.7 1739.8,258.9 1740.8,261.7 1741.7,265.2 1742.6,260.0 1743.5,267.5 1744.4,267.0 1745.4,260.0 1746.3,264.5 1747.2,266.4 1748.1,256.3 1749.0,265.1 1750.0,264.1 1750.9,263.7 1751.8,262.8 1752.7,268.4 1753.6,261.9 1754.6,258.1 1755.5,259.6 1756.4,261.6 1757.3,270.4 1758.2,264.2 1759.2,264.4 1760.1,263.0 1761.0,267.3 1761.9,263.6 1762.8,265.9 1763.8,264.8 1764.7,261.1 1765.6,266.3 1766.5,266.1 1767.4,265.8 1768.4,264.3 1769.3,265.5 1770.2,264.9 1771.1,268.4 1772.0,263.9 1773.0,264.6 1773.9,264.1 1774.8,262.3 1775.7,261.9 1776.6,264.7 1777.6,264.3 1778.5,270.4 1779.4,264.3 1780.3,266.7 1781.2,267.5 1782.2,261.8 1783.1,260.3 1784.0,267.7 1784.9,264.2 1785.8,256.0 1786.8,256.3 1787.7,260.2 1788.6,264.2 1789.5,267.3 1790.4,269.3 1791.4,269.0 1792.3,263.8 1793.2,265.1 1794.1,264.7 1795.0,263.9 1796.0,264.2 1796.9,263.1 1797.8,261.8 1798.7,263.7 1799.6,266.5 1800.6,265.9 1801.5,265.9 1802.4,267.1 1803.3,269.0 1804.2,265.3 1805.2,266.0 1806.1,265.0 1807.0,263.8 1807.9,268.2 1808.8,259.7 1809.8,260.7 1810.7,261.4 1811.6,265.3 1812.5,262.4 1813.4,268.8 1814.4,261.9 1815.3,262.4 1816.2,260.4 1817.1,263.4 1818.0,270.4 1819.0,265.8 1819.9,265.0 1820.8,265.2 1821.7,267.0 1823.3,263.5" fill="none" stroke="#ececec" stroke-width="1.3" stroke-linejoin="round"/>
<line x1="1401.3" y1="94" x2="1401.3" y2="318" stroke="#e8e840" stroke-width="1.3"/>
<line x1="979" y1="94" x2="979" y2="318" stroke="#e04a3a" stroke-width="1.8"/>
</svg>
<svg class="r" style="left:0;top:490px" width="1859" height="256" viewBox="0 490 1859 256">
<rect x="1364" y="513" width="8.2" height="149.5" fill="#444444"/>
<line x1="1385.5" y1="512.0" x2="1385.5" y2="663.3" stroke="#808080" stroke-width="1.15"/>
<line x1="1417.5" y1="512.0" x2="1417.5" y2="663.3" stroke="#808080" stroke-width="1.15"/>
<line x1="1449.5" y1="512.0" x2="1449.5" y2="663.3" stroke="#808080" stroke-width="1.15"/>
<line x1="1481.5" y1="512.0" x2="1481.5" y2="663.3" stroke="#808080" stroke-width="1.15"/>
<line x1="1514.5" y1="512.0" x2="1514.5" y2="663.3" stroke="#808080" stroke-width="1.15"/>
<line x1="1546.5" y1="512.0" x2="1546.5" y2="663.3" stroke="#808080" stroke-width="1.15"/>
<line x1="1578.5" y1="512.0" x2="1578.5" y2="663.3" stroke="#808080" stroke-width="1.15"/>
<line x1="1610.5" y1="512.0" x2="1610.5" y2="663.3" stroke="#808080" stroke-width="1.15"/>
<line x1="1642.5" y1="512.0" x2="1642.5" y2="663.3" stroke="#808080" stroke-width="1.15"/>
<line x1="1674.5" y1="512.0" x2="1674.5" y2="663.3" stroke="#808080" stroke-width="1.15"/>
<line x1="1707.5" y1="512.0" x2="1707.5" y2="663.3" stroke="#808080" stroke-width="1.15"/>
<line x1="1739.5" y1="512.0" x2="1739.5" y2="663.3" stroke="#808080" stroke-width="1.15"/>
<line x1="1771.5" y1="512.0" x2="1771.5" y2="663.3" stroke="#808080" stroke-width="1.15"/>
<line x1="1803.5" y1="512.0" x2="1803.5" y2="663.3" stroke="#808080" stroke-width="1.15"/>
<line x1="1835.5" y1="512.0" x2="1835.5" y2="663.3" stroke="#808080" stroke-width="1.15"/>
<line x1="1363.0" y1="542.5" x2="1844.6" y2="542.5" stroke="#808080" stroke-width="1.15"/>
<line x1="1363.0" y1="573.5" x2="1844.6" y2="573.5" stroke="#808080" stroke-width="1.15"/>
<line x1="1363.0" y1="603.5" x2="1844.6" y2="603.5" stroke="#808080" stroke-width="1.15"/>
<line x1="1363.0" y1="634.5" x2="1844.6" y2="634.5" stroke="#808080" stroke-width="1.15"/>
<rect x="1363.0" y="512.0" width="481.6" height="151.3" fill="none" stroke="#8c8c8c" stroke-width="1.8"/>
<line x1="1372.6" y1="513" x2="1372.6" y2="663" stroke="#e8e840" stroke-width="1" stroke-dasharray="1 1.3"/>
<polyline points="1363.6,649.4 1364.3,658.7 1365.0,648.8 1365.8,642.1 1366.5,636.0 1366.5,636.0 1367.2,641.5 1367.9,652.5 1368.6,654.9 1369.4,651.9 1370.1,644.3 1370.8,655.7 1371.5,635.1 1372.2,602.0 1372.9,586.0 1373.0,586.1 1373.7,607.3 1374.4,639.8 1375.1,657.4 1375.8,656.2 1376.6,654.8 1377.3,653.5 1378.0,647.4 1378.7,633.4 1379.4,602.9 1380.0,592.0 1380.2,593.0 1380.9,616.0 1381.6,644.9 1382.3,652.7 1383.0,652.0 1383.8,656.6 1384.5,653.6 1385.2,662.5 1385.9,660.3 1386.6,652.9 1387.4,657.7 1388.1,654.7 1388.8,654.2 1389.5,654.6 1390.2,662.5 1391.0,659.5 1391.7,653.9 1392.4,654.8 1393.1,654.4 1393.8,656.0 1394.6,662.5 1395.3,658.8 1396.0,657.6 1396.7,652.0 1397.4,653.2 1398.2,649.0 1398.9,657.3 1399.6,662.5 1400.3,662.5 1401.0,660.0 1401.8,662.5 1402.5,662.5 1403.2,652.8 1403.9,657.8 1404.6,657.5 1405.4,655.2 1406.1,652.2 1406.8,655.5 1407.5,655.8 1408.2,645.9 1409.0,652.4 1409.7,655.6 1410.4,654.6 1411.1,659.9 1411.8,657.8 1412.6,660.2 1413.3,660.5 1414.0,651.6 1414.7,649.1 1415.4,657.6 1416.2,656.7 1416.9,651.5 1417.6,621.9 1418.3,601.2 1418.3,601.2 1419.0,623.8 1419.8,652.5 1420.5,641.4 1421.2,622.8 1421.2,622.8 1421.9,641.4 1422.6,659.7 1423.4,649.6 1424.1,661.4 1424.8,650.8 1425.5,643.4 1426.2,652.6 1427.0,662.5 1427.7,650.1 1428.4,651.0 1429.1,646.7 1429.8,662.5 1430.6,658.0 1431.3,654.3 1432.0,650.1 1432.7,656.5 1433.4,657.4 1434.2,657.5 1434.9,659.9 1435.6,645.1 1436.3,660.9 1437.0,658.5 1437.8,662.3 1438.5,660.7 1439.2,652.6 1439.9,661.0 1440.6,661.6 1441.4,653.1 1442.1,639.6 1442.8,611.9 1443.5,594.2 1443.6,594.0 1444.2,606.1 1445.0,634.0 1445.7,653.9 1446.4,655.8 1447.1,662.5 1447.8,658.8 1448.6,656.8 1449.3,655.4 1450.0,662.5 1450.7,658.2 1451.4,662.5 1452.2,658.9 1452.9,650.6 1453.6,647.8 1454.3,658.6 1455.0,657.4 1455.8,655.7 1456.5,652.9 1457.2,654.2 1457.9,649.9 1458.6,648.4 1459.4,655.2 1460.1,656.0 1460.8,653.5 1461.5,661.3 1462.2,653.5 1463.0,660.5 1463.7,643.2 1464.4,659.1 1465.1,662.5 1465.8,655.7 1466.6,652.6 1467.3,662.5 1468.0,655.5 1468.7,662.5 1469.4,645.2 1470.2,647.1 1470.9,646.4 1471.6,662.5 1472.3,660.6 1473.0,657.3 1473.8,653.4 1474.5,654.7 1475.2,645.5 1475.9,616.9 1476.5,602.0 1476.6,603.0 1477.4,630.1 1478.1,655.4 1478.8,653.0 1479.5,642.8 1480.2,641.3 1481.0,610.8 1481.7,585.8 1481.9,584.0 1482.4,592.7 1483.1,623.7 1483.8,640.3 1484.6,636.5 1485.3,630.3 1486.0,628.0 1486.0,628.0 1486.7,630.3 1487.4,636.5 1488.2,644.2 1488.9,651.4 1489.6,648.1 1490.3,644.4 1491.0,641.5 1491.8,640.1 1492.5,640.4 1493.2,642.4 1493.9,645.6 1494.6,649.3 1495.4,649.5 1496.1,647.1 1496.8,651.3 1497.5,646.5 1498.2,646.6 1499.0,645.0 1499.7,644.1 1500.4,641.0 1501.1,645.1 1501.8,646.8 1502.6,649.1 1503.3,650.5 1504.0,654.2 1504.7,656.5 1505.4,652.7 1506.2,645.1 1506.9,648.6 1507.6,653.9 1508.3,650.4 1509.0,657.3 1509.8,653.9 1510.5,656.4 1511.2,653.1 1511.9,645.0 1512.6,650.2 1513.4,661.2 1514.1,655.9 1514.8,656.5 1515.5,657.3 1516.2,662.5 1517.0,653.8 1517.7,645.1 1518.4,657.1 1519.1,648.8 1519.8,647.9 1520.6,657.1 1521.3,652.2 1522.0,652.1 1522.7,657.6 1523.4,662.5 1524.2,656.8 1524.9,661.0 1525.6,649.6 1526.3,639.4 1527.0,655.6 1527.8,662.5 1528.5,651.2 1529.2,646.1 1529.9,662.5 1530.6,657.6 1531.4,646.7 1532.1,661.3 1532.8,654.0 1533.5,651.3 1534.2,650.3 1535.0,653.9 1535.7,651.9 1536.4,650.9 1537.1,640.1 1537.8,623.2 1537.8,623.3 1538.6,641.1 1539.3,656.2 1540.0,648.1 1540.7,654.6 1541.4,658.4 1542.2,649.9 1542.9,654.4 1543.6,662.5 1544.3,650.3 1545.0,656.6 1545.8,654.7 1546.5,653.0 1547.2,657.1 1547.9,662.5 1548.6,661.5 1549.4,652.0 1550.1,653.3 1550.8,652.1 1551.5,654.7 1552.2,657.0 1553.0,656.9 1553.7,647.0 1554.4,656.5 1555.1,658.6 1555.8,655.7 1556.6,641.1 1557.3,658.7 1558.0,662.5 1558.7,652.9 1559.4,659.7 1560.2,649.3 1560.9,647.1 1561.6,657.6 1562.3,648.4 1563.0,659.5 1563.8,651.2 1564.5,653.5 1565.2,662.5 1565.9,656.3 1566.6,661.6 1567.4,652.0 1568.1,627.4 1568.7,614.0 1568.8,614.4 1569.5,635.0 1570.2,652.0 1571.0,656.6 1571.7,662.5 1572.4,658.5 1573.1,657.0 1573.8,654.6 1574.6,651.2 1575.3,653.2 1576.0,649.9 1576.7,652.5 1577.4,657.0 1578.2,657.7 1578.9,654.6 1579.6,649.4 1580.3,649.5 1581.0,656.0 1581.8,662.5 1582.5,661.6 1583.2,656.2 1583.9,661.9 1584.6,646.2 1585.4,658.6 1586.1,657.6 1586.8,654.6 1587.5,647.9 1588.2,655.2 1589.0,654.5 1589.7,654.9 1590.4,652.1 1591.1,655.7 1591.8,651.0 1592.6,644.7 1593.3,651.0 1594.0,646.8 1594.7,660.5 1595.4,645.6 1596.2,662.5 1596.9,652.9 1597.6,660.7 1598.3,653.6 1599.0,659.0 1599.8,645.8 1600.5,653.7 1601.2,657.2 1601.9,639.0 1602.6,649.3 1603.4,654.4 1604.1,657.2 1604.8,654.5 1605.5,658.6 1606.2,657.7 1607.0,662.5 1607.7,660.7 1608.4,653.9 1609.1,653.0 1609.8,646.7 1610.6,655.2 1611.3,662.5 1612.0,654.8 1612.7,654.8 1613.4,647.5 1614.2,660.5 1614.9,648.9 1615.6,662.5 1616.3,646.0 1617.0,647.5 1617.8,655.1 1618.5,653.6 1619.2,658.1 1619.9,654.0 1620.6,659.0 1621.4,648.0 1622.1,662.5 1622.8,650.5 1623.5,643.2 1624.2,642.0 1625.0,650.1 1625.7,657.4 1626.4,660.7 1627.1,657.1 1627.8,660.2 1628.6,656.7 1629.3,651.5 1630.0,652.0 1630.7,657.1 1631.4,652.5 1632.2,662.5 1632.9,656.8 1633.6,658.3 1634.3,651.2 1635.0,661.2 1635.8,662.5 1636.5,650.6 1637.2,649.3 1637.9,662.5 1638.6,658.4 1639.4,659.3 1640.1,661.3 1640.8,651.4 1641.5,655.8 1642.2,662.5 1643.0,662.5 1643.7,656.6 1644.4,660.5 1645.1,653.4 1645.8,642.3 1646.6,659.3 1647.3,653.1 1648.0,662.5 1648.7,662.5 1649.4,662.4 1650.2,653.1 1650.9,656.0 1651.6,655.6 1652.3,658.6 1653.0,655.3 1653.8,651.2 1654.5,651.4 1655.2,660.5 1655.9,656.0 1656.6,655.7 1657.4,657.1 1658.1,656.0 1658.8,657.7 1659.5,652.7 1660.2,651.4 1661.0,661.6 1661.7,649.8 1662.4,661.9 1663.1,655.9 1663.8,651.4 1664.6,655.6 1665.3,647.7 1666.0,662.5 1666.7,661.4 1667.4,647.5 1668.2,658.7 1668.9,658.1 1669.6,651.4 1670.3,650.3 1671.0,659.6 1671.8,659.0 1672.5,651.3 1673.2,662.3 1673.9,657.1 1674.6,658.6 1675.4,643.6 1676.1,651.9 1676.8,662.5 1677.5,646.3 1678.2,655.9 1679.0,661.9 1679.7,662.5 1680.4,652.4 1681.1,662.0 1681.8,662.5 1682.6,655.9 1683.3,661.0 1684.0,662.5 1684.7,660.3 1685.4,658.7 1686.2,650.1 1686.9,662.5 1687.6,662.5 1688.3,662.5 1689.0,649.3 1689.8,654.5 1690.5,662.5 1691.2,646.8 1691.9,662.5 1692.6,662.5 1693.4,656.9 1694.1,662.5 1694.8,650.4 1695.5,655.8 1696.2,662.5 1697.0,653.3 1697.7,656.1 1698.4,650.8 1699.1,660.3 1699.8,656.9 1700.6,650.8 1701.3,661.4 1702.0,655.9 1702.7,662.5 1703.4,662.5 1704.2,658.5 1704.9,651.2 1705.6,652.7 1706.3,652.9 1707.0,647.4 1707.8,662.5 1708.5,656.1 1709.2,649.6 1709.9,659.5 1710.6,650.4 1711.4,655.5 1712.1,662.5 1712.8,659.6 1713.5,648.6 1714.2,650.9 1715.0,659.2 1715.7,657.8 1716.4,655.0 1717.1,657.6 1717.8,656.8 1718.6,661.4 1719.3,662.5 1720.0,661.8 1720.7,660.6 1721.4,652.0 1722.2,656.3 1722.9,642.0 1723.6,661.6 1724.3,657.3 1725.0,647.5 1725.8,661.4 1726.5,652.1 1727.2,656.6 1727.9,660.5 1728.6,653.5 1729.4,662.5 1730.1,655.6 1730.8,662.5 1731.5,650.7 1732.2,652.5 1733.0,661.7 1733.7,660.4 1734.4,656.4 1735.1,657.9 1735.8,655.2 1736.6,651.7 1737.3,662.5 1738.0,662.4 1738.7,662.5 1739.4,660.1 1740.2,658.5 1740.9,657.7 1741.6,660.0 1742.3,657.9 1743.0,651.1 1743.8,653.0 1744.5,654.3 1745.2,654.2 1745.9,644.5 1746.6,649.9 1747.4,653.1 1748.1,655.6 1748.8,656.4 1749.5,656.7 1750.2,652.1 1751.0,661.3 1751.7,662.5 1752.4,656.5 1753.1,650.8 1753.8,659.7 1754.6,662.5 1755.3,651.0 1756.0,648.0 1756.7,661.5 1757.4,649.2 1758.2,661.1 1758.9,662.5 1759.6,657.1 1760.3,662.5 1761.0,657.6 1761.8,652.4 1762.5,644.5 1763.2,653.2 1763.9,645.9 1764.6,651.3 1765.4,662.5 1766.1,657.3 1766.8,648.1 1767.5,662.5 1768.2,646.6 1769.0,653.7 1769.7,655.9 1770.4,658.1 1771.1,652.0 1771.8,648.7 1772.6,658.6 1773.3,660.4 1774.0,656.4 1774.7,647.6 1775.4,654.3 1776.2,662.5 1776.9,659.7 1777.6,656.2 1778.3,660.7 1779.0,657.5 1779.8,652.7 1780.5,656.4 1781.2,662.5 1781.9,656.3 1782.6,656.4 1783.4,661.5 1784.1,652.6 1784.8,628.9 1785.5,609.5 1785.6,609.3 1786.2,622.9 1787.0,648.6 1787.7,658.4 1788.4,646.3 1789.1,650.0 1789.8,659.6 1790.6,651.8 1791.3,654.4 1792.0,659.5 1792.7,657.7 1793.4,660.4 1794.2,639.1 1794.9,662.5 1795.6,651.6 1796.3,662.0 1797.0,656.3 1797.8,657.6 1798.5,646.2 1799.2,662.5 1799.9,654.3 1800.6,659.1 1801.4,657.4 1802.1,642.6 1802.8,654.7 1803.5,658.1 1804.2,652.4 1805.0,649.5 1805.7,659.7 1806.4,652.8 1807.1,650.0 1807.8,659.8 1808.6,655.9 1809.3,662.5 1810.0,657.8 1810.7,661.0 1811.4,647.7 1812.2,662.5 1812.9,651.1 1813.6,659.8 1814.3,646.8 1815.0,652.3 1815.8,650.3 1816.5,645.1 1817.2,649.3 1817.9,644.0 1818.6,654.8 1819.4,654.6 1820.1,661.8 1820.8,658.6 1821.5,655.9 1822.2,659.8 1823.0,660.8 1823.7,659.2 1824.4,653.6 1825.1,658.1 1825.8,643.0 1826.6,653.5 1827.3,656.5 1828.0,658.8 1828.7,651.5 1829.4,652.8 1830.2,662.3 1830.9,651.8 1831.6,659.1 1832.3,662.5 1833.0,651.6 1833.8,662.3 1834.5,650.9 1835.2,650.7 1835.9,654.7 1836.6,662.5 1837.4,657.9 1838.1,655.6 1838.8,654.5 1839.5,661.6 1840.2,658.0 1841.0,660.4 1841.7,662.5 1842.4,656.5 1843.1,648.1 1843.8,656.8 1844.6,646.3" fill="none" stroke="#e8e8e8" stroke-width="1.2" stroke-linejoin="round"/>
<circle cx="1372.9" cy="583.1" r="5.6" fill="#e8141c"/>
<circle cx="1379.9" cy="588.3" r="5.6" fill="#8a2be2"/>
<circle cx="1443.6" cy="590.5" r="5.6" fill="#1ea2e0"/>
<circle cx="1481.9" cy="579.4" r="5.6" fill="#ffee10"/>
</svg>
<svg class="r" style="left:0;top:783px" width="1859" height="192" viewBox="0 783 1859 192">
<defs>
<linearGradient id="m0" gradientUnits="userSpaceOnUse" x1="0" y1="885.7" x2="0" y2="970.5"><stop offset="0" stop-color="#f6f6f6"/><stop offset="0.000" stop-color="#ececc0"/><stop offset="0.298" stop-color="#e6e668"/><stop offset="1" stop-color="#e2e250"/></linearGradient>
<linearGradient id="m1" gradientUnits="userSpaceOnUse" x1="0" y1="841.4" x2="0" y2="970.5"><stop offset="0" stop-color="#f6f6f6"/><stop offset="0.307" stop-color="#ececc0"/><stop offset="0.694" stop-color="#e6e668"/><stop offset="1" stop-color="#e2e250"/></linearGradient>
<linearGradient id="m2" gradientUnits="userSpaceOnUse" x1="0" y1="876.6" x2="0" y2="970.5"><stop offset="0" stop-color="#f6f6f6"/><stop offset="0.000" stop-color="#ececc0"/><stop offset="0.409" stop-color="#e6e668"/><stop offset="1" stop-color="#e2e250"/></linearGradient>
<linearGradient id="m3" gradientUnits="userSpaceOnUse" x1="0" y1="871.8" x2="0" y2="970.5"><stop offset="0" stop-color="#f6f6f6"/><stop offset="0.032" stop-color="#ececc0"/><stop offset="0.539" stop-color="#e6e668"/><stop offset="1" stop-color="#e2e250"/></linearGradient>
<linearGradient id="m4" gradientUnits="userSpaceOnUse" x1="0" y1="842.2" x2="0" y2="970.5"><stop offset="0" stop-color="#f6f6f6"/><stop offset="0.334" stop-color="#ececc0"/><stop offset="0.723" stop-color="#e6e668"/><stop offset="1" stop-color="#e2e250"/></linearGradient>
<linearGradient id="m5" gradientUnits="userSpaceOnUse" x1="0" y1="854.6" x2="0" y2="970.5"><stop offset="0" stop-color="#f6f6f6"/><stop offset="0.219" stop-color="#ececc0"/><stop offset="0.651" stop-color="#e6e668"/><stop offset="1" stop-color="#e2e250"/></linearGradient>
<linearGradient id="m6" gradientUnits="userSpaceOnUse" x1="0" y1="804.9" x2="0" y2="970.5"><stop offset="0" stop-color="#f6f6f6"/><stop offset="0.303" stop-color="#ececc0"/><stop offset="0.604" stop-color="#e6e668"/><stop offset="1" stop-color="#e2e250"/></linearGradient>
<linearGradient id="m7" gradientUnits="userSpaceOnUse" x1="0" y1="820.0" x2="0" y2="970.5"><stop offset="0" stop-color="#f6f6f6"/><stop offset="0.405" stop-color="#ececc0"/><stop offset="0.738" stop-color="#e6e668"/><stop offset="1" stop-color="#e2e250"/></linearGradient>
<linearGradient id="m8" gradientUnits="userSpaceOnUse" x1="0" y1="857.3" x2="0" y2="970.5"><stop offset="0" stop-color="#f6f6f6"/><stop offset="0.112" stop-color="#ececc0"/><stop offset="0.554" stop-color="#e6e668"/><stop offset="1" stop-color="#e2e250"/></linearGradient>
<linearGradient id="m9" gradientUnits="userSpaceOnUse" x1="0" y1="806.0" x2="0" y2="970.5"><stop offset="0" stop-color="#f6f6f6"/><stop offset="0.237" stop-color="#ececc0"/><stop offset="0.541" stop-color="#e6e668"/><stop offset="1" stop-color="#e2e250"/></linearGradient>
<linearGradient id="m10" gradientUnits="userSpaceOnUse" x1="0" y1="805.0" x2="0" y2="970.5"><stop offset="0" stop-color="#f6f6f6"/><stop offset="0.133" stop-color="#ececc0"/><stop offset="0.435" stop-color="#e6e668"/><stop offset="1" stop-color="#e2e250"/></linearGradient>
<linearGradient id="m11" gradientUnits="userSpaceOnUse" x1="0" y1="849.4" x2="0" y2="970.5"><stop offset="0" stop-color="#f6f6f6"/><stop offset="0.000" stop-color="#ececc0"/><stop offset="0.211" stop-color="#e6e668"/><stop offset="1" stop-color="#e2e250"/></linearGradient>
<linearGradient id="m12" gradientUnits="userSpaceOnUse" x1="0" y1="812.8" x2="0" y2="970.5"><stop offset="0" stop-color="#f6f6f6"/><stop offset="0.000" stop-color="#ececc0"/><stop offset="0.172" stop-color="#e6e668"/><stop offset="1" stop-color="#e2e250"/></linearGradient>
<linearGradient id="m13" gradientUnits="userSpaceOnUse" x1="0" y1="806.0" x2="0" y2="970.5"><stop offset="0" stop-color="#f6f6f6"/><stop offset="0.176" stop-color="#ececc0"/><stop offset="0.480" stop-color="#e6e668"/><stop offset="1" stop-color="#e2e250"/></linearGradient>
<linearGradient id="m14" gradientUnits="userSpaceOnUse" x1="0" y1="809.0" x2="0" y2="970.5"><stop offset="0" stop-color="#f6f6f6"/><stop offset="0.000" stop-color="#ececc0"/><stop offset="0.285" stop-color="#e6e668"/><stop offset="1" stop-color="#e2e250"/></linearGradient>
<linearGradient id="m15" gradientUnits="userSpaceOnUse" x1="0" y1="841.1" x2="0" y2="970.5"><stop offset="0" stop-color="#f6f6f6"/><stop offset="0.355" stop-color="#ececc0"/><stop offset="0.741" stop-color="#e6e668"/><stop offset="1" stop-color="#e2e250"/></linearGradient>
</defs>
<line x1="1150.5" y1="804.0" x2="1150.5" y2="971.0" stroke="#808080" stroke-width="1.15"/>
<line x1="1221.5" y1="804.0" x2="1221.5" y2="971.0" stroke="#808080" stroke-width="1.15"/>
<line x1="1293.5" y1="804.0" x2="1293.5" y2="971.0" stroke="#808080" stroke-width="1.15"/>
<line x1="1364.5" y1="804.0" x2="1364.5" y2="971.0" stroke="#808080" stroke-width="1.15"/>
<line x1="1435.5" y1="804.0" x2="1435.5" y2="971.0" stroke="#808080" stroke-width="1.15"/>
<line x1="1507.5" y1="804.0" x2="1507.5" y2="971.0" stroke="#808080" stroke-width="1.15"/>
<line x1="1578.5" y1="804.0" x2="1578.5" y2="971.0" stroke="#808080" stroke-width="1.15"/>
<line x1="1649.5" y1="804.0" x2="1649.5" y2="971.0" stroke="#808080" stroke-width="1.15"/>
<line x1="1720.5" y1="804.0" x2="1720.5" y2="971.0" stroke="#808080" stroke-width="1.15"/>
<line x1="1792.5" y1="804.0" x2="1792.5" y2="971.0" stroke="#808080" stroke-width="1.15"/>
<line x1="1105.8" y1="838.5" x2="1836.3" y2="838.5" stroke="#808080" stroke-width="1.15"/>
<line x1="1105.8" y1="871.5" x2="1836.3" y2="871.5" stroke="#808080" stroke-width="1.15"/>
<line x1="1105.8" y1="905.5" x2="1836.3" y2="905.5" stroke="#808080" stroke-width="1.15"/>
<line x1="1105.8" y1="938.5" x2="1836.3" y2="938.5" stroke="#808080" stroke-width="1.15"/>
<rect x="1105.8" y="804.0" width="730.5" height="167.0" fill="none" stroke="#8c8c8c" stroke-width="1.8"/>
<line x1="1197.5" y1="806" x2="1197.5" y2="970" stroke="#e6dc28" stroke-width="2.3" stroke-dasharray="2 1.6"/>
<line x1="1334.5" y1="806" x2="1334.5" y2="970" stroke="#e6dc28" stroke-width="2.3" stroke-dasharray="2 1.6"/>
<line x1="1471.5" y1="806" x2="1471.5" y2="970" stroke="#e6dc28" stroke-width="2.3" stroke-dasharray="2 1.6"/>
<line x1="1608.5" y1="806" x2="1608.5" y2="970" stroke="#e6dc28" stroke-width="2.3" stroke-dasharray="2 1.6"/>
<line x1="1745.5" y1="806" x2="1745.5" y2="970" stroke="#e6dc28" stroke-width="2.3" stroke-dasharray="2 1.6"/>
<path d="M1199.70 970.5 L1200.45 885.7 L1201.55 885.7 L1202.30 970.5 Z" fill="url(#m0)"/>
<path d="M1251.50 970.5 L1252.25 841.4 L1253.35 841.4 L1254.10 970.5 Z" fill="url(#m1)"/>
<path d="M1285.30 970.5 L1286.05 876.6 L1287.15 876.6 L1287.90 970.5 Z" fill="url(#m2)"/>
<path d="M1319.80 970.5 L1320.55 871.8 L1321.65 871.8 L1322.40 970.5 Z" fill="url(#m3)"/>
<path d="M1336.60 970.5 L1337.35 842.2 L1338.45 842.2 L1339.20 970.5 Z" fill="url(#m4)"/>
<path d="M1388.20 970.5 L1388.95 854.6 L1390.05 854.6 L1390.80 970.5 Z" fill="url(#m5)"/>
<path d="M1422.10 970.5 L1422.85 804.9 L1423.95 804.9 L1424.70 970.5 Z" fill="url(#m6)"/>
<path d="M1456.50 970.5 L1457.25 820.0 L1458.35 820.0 L1459.10 970.5 Z" fill="url(#m7)"/>
<path d="M1474.20 970.5 L1474.95 857.3 L1476.05 857.3 L1476.80 970.5 Z" fill="url(#m8)"/>
<path d="M1525.10 970.5 L1525.85 806.0 L1526.95 806.0 L1527.70 970.5 Z" fill="url(#m9)"/>
<path d="M1559.70 970.5 L1560.45 805.0 L1561.55 805.0 L1562.30 970.5 Z" fill="url(#m10)"/>
<path d="M1593.40 970.5 L1594.15 849.4 L1595.25 849.4 L1596.00 970.5 Z" fill="url(#m11)"/>
<path d="M1610.80 970.5 L1611.55 812.8 L1612.65 812.8 L1613.40 970.5 Z" fill="url(#m12)"/>
<path d="M1662.40 970.5 L1663.15 806.0 L1664.25 806.0 L1665.00 970.5 Z" fill="url(#m13)"/>
<path d="M1696.30 970.5 L1697.05 809.0 L1698.15 809.0 L1698.90 970.5 Z" fill="url(#m14)"/>
<path d="M1730.50 970.5 L1731.25 841.1 L1732.35 841.1 L1733.10 970.5 Z" fill="url(#m15)"/>
<path d="M1198.00 970.5 L1198.70 958.0 L1199.90 958.0 L1200.60 970.5 Z" fill="#96cc58"/>
<path d="M1249.00 970.5 L1249.70 955.7 L1250.90 955.7 L1251.60 970.5 Z" fill="#96cc58"/>
<path d="M1283.20 970.5 L1283.90 930.8 L1285.10 930.8 L1285.80 970.5 Z" fill="#96cc58"/>
<path d="M1317.30 970.5 L1318.00 930.4 L1319.20 930.4 L1319.90 970.5 Z" fill="#96cc58"/>
<path d="M1386.30 970.5 L1387.00 947.4 L1388.20 947.4 L1388.90 970.5 Z" fill="#96cc58"/>
<path d="M1420.30 970.5 L1421.00 949.5 L1422.20 949.5 L1422.90 970.5 Z" fill="#96cc58"/>
<path d="M1454.60 970.5 L1455.30 954.0 L1456.50 954.0 L1457.20 970.5 Z" fill="#96cc58"/>
<path d="M1472.20 970.5 L1472.90 955.7 L1474.10 955.7 L1474.80 970.5 Z" fill="#96cc58"/>
<path d="M1523.00 970.5 L1523.70 915.3 L1524.90 915.3 L1525.60 970.5 Z" fill="#96cc58"/>
<path d="M1557.20 970.5 L1557.90 910.0 L1559.10 910.0 L1559.80 970.5 Z" fill="#96cc58"/>
<path d="M1591.20 970.5 L1591.90 855.9 L1593.10 855.9 L1593.80 970.5 Z" fill="#96cc58"/>
<path d="M1608.50 970.5 L1609.20 884.2 L1610.40 884.2 L1611.10 970.5 Z" fill="#96cc58"/>
<path d="M1660.10 970.5 L1660.80 869.1 L1662.00 869.1 L1662.70 970.5 Z" fill="#96cc58"/>
<path d="M1694.30 970.5 L1695.00 847.0 L1696.20 847.0 L1696.90 970.5 Z" fill="#96cc58"/>
<path d="M1728.40 970.5 L1729.10 850.0 L1730.30 850.0 L1731.00 970.5 Z" fill="#96cc58"/>
<path d="M1204.00 970.5 L1204.60 933.3 L1205.80 933.3 L1206.40 970.5 Z" fill="#a8a8a8"/>
<path d="M1205.70 970.5 L1206.30 955.0 L1207.50 955.0 L1208.10 970.5 Z" fill="#a8a8a8"/>
<path d="M1254.10 970.5 L1254.70 953.2 L1255.90 953.2 L1256.50 970.5 Z" fill="#a8a8a8"/>
<path d="M1255.40 970.5 L1256.00 953.5 L1257.20 953.5 L1257.80 970.5 Z" fill="#a8a8a8"/>
<path d="M1289.50 970.5 L1290.10 932.9 L1291.30 932.9 L1291.90 970.5 Z" fill="#a8a8a8"/>
<path d="M1323.70 970.5 L1324.30 928.1 L1325.50 928.1 L1326.10 970.5 Z" fill="#a8a8a8"/>
<path d="M1325.30 970.5 L1325.90 959.8 L1327.10 959.8 L1327.70 970.5 Z" fill="#a8a8a8"/>
<path d="M1342.30 970.5 L1342.90 935.6 L1344.10 935.6 L1344.70 970.5 Z" fill="#a8a8a8"/>
<path d="M1393.00 970.5 L1393.60 940.1 L1394.80 940.1 L1395.40 970.5 Z" fill="#a8a8a8"/>
<path d="M1391.40 970.5 L1392.00 960.0 L1393.20 960.0 L1393.80 970.5 Z" fill="#a8a8a8"/>
<path d="M1426.60 970.5 L1427.20 938.5 L1428.40 938.5 L1429.00 970.5 Z" fill="#a8a8a8"/>
<path d="M1460.80 970.5 L1461.40 933.3 L1462.60 933.3 L1463.20 970.5 Z" fill="#a8a8a8"/>
<path d="M1478.00 970.5 L1478.60 965.0 L1479.80 965.0 L1480.40 970.5 Z" fill="#a8a8a8"/>
<path d="M1481.70 970.5 L1482.30 964.5 L1483.50 964.5 L1484.10 970.5 Z" fill="#a8a8a8"/>
<path d="M1529.30 970.5 L1529.90 942.2 L1531.10 942.2 L1531.70 970.5 Z" fill="#a8a8a8"/>
<path d="M1563.50 970.5 L1564.10 953.2 L1565.30 953.2 L1565.90 970.5 Z" fill="#a8a8a8"/>
<path d="M1615.30 970.5 L1615.90 961.5 L1617.10 961.5 L1617.70 970.5 Z" fill="#a8a8a8"/>
<path d="M1733.30 970.5 L1733.90 966.0 L1735.10 966.0 L1735.70 970.5 Z" fill="#a8a8a8"/>
<rect x="1105" y="968.6" width="92" height="2" fill="#9a9a9a"/>
<rect x="1746" y="968.6" width="90" height="2" fill="#9a9a9a"/>
</svg>
<!-- widgets -->
<div class="r" style="left:4.1px;top:231.1px;width:166.9px;height:41.5px;background:#808080;border:1px solid #909090;border-bottom:none;box-sizing:border-box;border-radius:3.5px 17px 0 0 / 3.5px 13.6px 0 0;"></div>
<div class="r" style="left:172.3px;top:231.1px;width:138.7px;height:41.5px;background:#808080;border:1px solid #909090;border-bottom:none;box-sizing:border-box;border-radius:3.5px 17px 0 0 / 3.5px 13.6px 0 0;"></div>
<div class="r" style="left:312.3px;top:231.1px;width:121.4px;height:42.1px;background:#404040;border:1px solid #626262;border-bottom:none;box-sizing:border-box;border-radius:3.5px 17px 0 0 / 3.5px 13.6px 0 0;"></div>
<div class="r" style="left:0px;top:272.3px;width:1.2px;height:121px;background:#2c2c2c;"></div>
<div class="r" style="left:50.6px;top:133.7px;width:7.6px;height:7.6px;border-radius:50%;background:#f6f615;"></div>
<div class="r" style="left:165.6px;top:133.7px;width:7.6px;height:7.6px;border-radius:50%;background:#f6f615;"></div>
<div class="r" style="left:280.1px;top:133.7px;width:7.6px;height:7.6px;border-radius:50%;background:#f6f615;"></div>
<div class="r" style="left:163px;top:301.4px;width:20px;height:20px;border-radius:50%;background:#e2e2e2;"></div>
<div class="r" style="left:163.5px;top:363.3px;width:312.5px;height:2.8px;background:#e6e6e6;border-radius:1.4px;"></div>
<div class="r" style="left:472.2px;top:355.2px;width:19.6px;height:19.6px;border-radius:50%;background:radial-gradient(circle at 50% 50%, rgba(0,0,0,0) 62%, rgba(0,0,0,0.6) 100%), linear-gradient(#fbfbfb 6%, #cfcfcf 38%, #a0a0a0 70%, #7c7c7c 100%);"></div>
<div class="r" style="left:563.6px;top:88.2px;width:19.4px;height:19.4px;border-radius:50%;background:#e4e4e4;"></div>
<div class="r" style="left:670.2px;top:88.1px;width:19.6px;height:19.6px;border-radius:50%;background:#e4e4e4;"></div>
<svg class="r" style="left:670px;top:87.9px" width="20" height="20" viewBox="0 0 20 20"><path d="M6.1 6.1 L13.9 13.9 M13.9 6.1 L6.1 13.9" stroke="#484848" stroke-width="3" stroke-linecap="round"/></svg>
<div class="r" style="left:564.3px;top:194.3px;width:213px;height:2.8px;background:#e6e6e6;border-radius:1.4px;"></div>
<div class="r" style="left:572.5px;top:180px;width:1.6px;height:5px;background:#c4c4c4;"></div>
<div class="r" style="left:592.27px;top:180px;width:1.6px;height:5px;background:#c4c4c4;"></div>
<div class="r" style="left:612.04px;top:180px;width:1.6px;height:5px;background:#c4c4c4;"></div>
<div class="r" style="left:631.81px;top:180px;width:1.6px;height:5px;background:#c4c4c4;"></div>
<div class="r" style="left:651.58px;top:180px;width:1.6px;height:5px;background:#c4c4c4;"></div>
<div class="r" style="left:671.35px;top:180px;width:1.6px;height:5px;background:#c4c4c4;"></div>
<div class="r" style="left:691.12px;top:180px;width:1.6px;height:5px;background:#c4c4c4;"></div>
<div class="r" style="left:710.89px;top:180px;width:1.6px;height:5px;background:#c4c4c4;"></div>
<div class="r" style="left:730.66px;top:180px;width:1.6px;height:5px;background:#c4c4c4;"></div>
<div class="r" style="left:750.43px;top:180px;width:1.6px;height:5px;background:#c4c4c4;"></div>
<div class="r" style="left:770.2px;top:180px;width:1.6px;height:5px;background:#c4c4c4;"></div>
<div class="r" style="left:642.5px;top:186.2px;width:19.6px;height:19.6px;border-radius:50%;background:radial-gradient(circle at 50% 50%, rgba(0,0,0,0) 62%, rgba(0,0,0,0.6) 100%), linear-gradient(#fbfbfb 6%, #cfcfcf 38%, #a0a0a0 70%, #7c7c7c 100%);"></div>
<div class="r" style="left:564.3px;top:284.3px;width:213px;height:2.8px;background:#e6e6e6;border-radius:1.4px;"></div>
<div class="r" style="left:564.5px;top:276.2px;width:19.6px;height:19.6px;border-radius:50%;background:radial-gradient(circle at 50% 50%, rgba(0,0,0,0) 62%, rgba(0,0,0,0.6) 100%), linear-gradient(#fbfbfb 6%, #cfcfcf 38%, #a0a0a0 70%, #7c7c7c 100%);"></div>
<div class="r" style="left:564.3px;top:373.6px;width:213px;height:2.8px;background:#e6e6e6;border-radius:1.4px;"></div>
<div class="r" style="left:564.5px;top:365.5px;width:19.6px;height:19.6px;border-radius:50%;background:radial-gradient(circle at 50% 50%, rgba(0,0,0,0) 62%, rgba(0,0,0,0.6) 100%), linear-gradient(#fbfbfb 6%, #cfcfcf 38%, #a0a0a0 70%, #7c7c7c 100%);"></div>
<div class="r" style="left:802.3px;top:73.3px;width:7px;height:236.7px;background:#a6a6a6;border-radius:3.5px;"></div>
<div class="r" style="left:35.8px;top:416px;width:90.4px;height:33px;border:1.3px solid #b4b4b4;border-radius:4px;box-sizing:border-box;background:#262626"></div>
<svg class="r" style="left:30px;top:408px" width="104" height="52" viewBox="30 408 104 52"><path d="M36.4 460 V413.8 H125.6 V460" fill="none" stroke="#0c0c0c" stroke-width="1.3" stroke-dasharray="1.3 1.7"/></svg>
<svg class="r" style="left:93px;top:427.6px" width="16" height="10"><path d="M0.4 0.4 H15.5 L8 8.6 Z" fill="#fff"/></svg>
<div class="r" style="left:140.7px;top:400.6px;width:1.1px;height:59px;background:#d0d0d0;"></div>
<div class="r" style="left:760.3px;top:416.5px;width:37.4px;height:31.8px;border:1px solid #8c8c8c;border-radius:3px;box-sizing:border-box;background:#262626"></div>
<svg class="r" style="left:770.7px;top:428.4px" width="16" height="9"><path d="M0.3 0.3 H15.3 L7.8 7.8 Z" fill="#fff"/></svg>
<div class="r" style="left:833px;top:415.8px;width:34px;height:34px;border-radius:50%;background:#27659b;"></div>
<div class="r" style="left:842.8px;top:425.6px;width:14.4px;height:14.4px;border-radius:50%;background:#ff0a0a;"></div>
<div class="r" style="left:885px;top:415.8px;width:34px;height:34px;border-radius:50%;background:#1f4a70;"></div>
<div class="r" style="left:895.4px;top:425px;width:13.2px;height:15.6px;background:#1a1a1a;"></div>
<div class="r" style="left:1795px;top:414.3px;width:80px;height:32.7px;border:1px solid #9a9a9a;border-radius:4px;box-sizing:border-box;background:#262626"></div>
<svg class="r" style="left:1851px;top:426px" width="16" height="10"><path d="M0.5 0.6 H15.5 L8 9 Z" fill="#fff"/></svg>
<div class="r" style="left:492.8px;top:528px;width:59.9px;height:37px;background:#808080;"></div>
<div class="r" style="left:492.8px;top:574.15px;width:59.9px;height:37px;background:#008000;"></div>
<div class="r" style="left:492.8px;top:620.3px;width:59.9px;height:37px;background:#808080;"></div>
<div class="r" style="left:492.8px;top:666.45px;width:59.9px;height:37px;background:#008000;"></div>
<div class="r" style="left:492.8px;top:712.6px;width:59.9px;height:37px;background:#808080;"></div>
<div class="r" style="left:492.8px;top:758.75px;width:59.9px;height:37px;background:#808080;"></div>
<div class="r" style="left:492.8px;top:528px;width:18.2px;height:37px;background:#ffa500;"></div>
<div class="r" style="left:492.8px;top:712.6px;width:14.7px;height:37px;background:#008000;"></div>
<div class="r" style="left:492.8px;top:758.75px;width:38.2px;height:37px;background:#008000;"></div>
<div class="r" style="left:0;top:0;width:983.7px;height:600px;overflow:hidden">
<div class="r" style="left:585.6px;top:471px;width:183.9px;height:41.5px;background:#808080;border:1px solid #98a0a8;border-bottom:none;box-sizing:border-box;border-radius:4px 18px 0 0 / 4px 14.4px 0 0;"></div>
<div class="r" style="left:770.2px;top:471px;width:229.8px;height:41.5px;background:#808080;border:1px solid #98a0a8;border-bottom:none;box-sizing:border-box;border-radius:4px 18px 0 0 / 4px 14.4px 0 0;"></div>
<div class="r" style="left:585.6px;top:520px;width:138.2px;height:41.7px;background:#808080;border:1px solid #98a0a8;border-bottom:none;box-sizing:border-box;border-radius:4px 18px 0 0 / 4px 14.4px 0 0;"></div>
<div class="r" style="left:840px;top:520px;width:160px;height:41.7px;background:#808080;border:1px solid #98a0a8;border-bottom:none;box-sizing:border-box;border-radius:4px 18px 0 0 / 4px 14.4px 0 0;"></div>
<div class="r" style="left:725px;top:520px;width:114.3px;height:42.2px;background:#1d5a8a;border:1px solid #4a82b0;border-bottom:none;box-sizing:border-box;border-radius:4px 18px 0 0 / 4px 14.4px 0 0;"></div>
</div>
<div class="r" style="left:626.4px;top:576.9px;width:13.2px;height:13.2px;border-radius:50%;background:#ff0a0a;"></div>
<div class="r" style="left:670px;top:576.2px;width:13px;height:14.4px;background:#0f2d50;"></div>
<div class="r" style="left:597.2px;top:604.4px;width:371px;height:2.1px;background:#a2bedc;"></div>
<div class="r" style="left:597.2px;top:659.4px;width:371px;height:2px;background:#a2bedc;"></div>
<div class="r" style="left:1005.9px;top:508.4px;width:19.6px;height:19.6px;border-radius:50%;background:#e4e4e4;"></div>
<div class="r" style="left:1112.2px;top:508.4px;width:19.6px;height:19.6px;border-radius:50%;background:#e4e4e4;"></div>
<div class="r" style="left:1006.3px;top:614.1px;width:206.1px;height:2.8px;background:#e6e6e6;border-radius:1.4px;"></div>
<div class="r" style="left:1015.5px;top:600.2px;width:1.6px;height:4.8px;background:#c4c4c4;"></div>
<div class="r" style="left:1035.24px;top:600.2px;width:1.6px;height:4.8px;background:#c4c4c4;"></div>
<div class="r" style="left:1054.98px;top:600.2px;width:1.6px;height:4.8px;background:#c4c4c4;"></div>
<div class="r" style="left:1074.72px;top:600.2px;width:1.6px;height:4.8px;background:#c4c4c4;"></div>
<div class="r" style="left:1094.46px;top:600.2px;width:1.6px;height:4.8px;background:#c4c4c4;"></div>
<div class="r" style="left:1114.2px;top:600.2px;width:1.6px;height:4.8px;background:#c4c4c4;"></div>
<div class="r" style="left:1133.94px;top:600.2px;width:1.6px;height:4.8px;background:#c4c4c4;"></div>
<div class="r" style="left:1153.68px;top:600.2px;width:1.6px;height:4.8px;background:#c4c4c4;"></div>
<div class="r" style="left:1173.42px;top:600.2px;width:1.6px;height:4.8px;background:#c4c4c4;"></div>
<div class="r" style="left:1193.16px;top:600.2px;width:1.6px;height:4.8px;background:#c4c4c4;"></div>
<div class="r" style="left:1045.6px;top:606px;width:19.6px;height:19.6px;border-radius:50%;background:radial-gradient(circle at 50% 50%, rgba(0,0,0,0) 62%, rgba(0,0,0,0.6) 100%), linear-gradient(#fbfbfb 6%, #cfcfcf 38%, #a0a0a0 70%, #7c7c7c 100%);"></div>
<div class="r" style="left:1006.3px;top:688.8px;width:206.1px;height:2.8px;background:#e6e6e6;border-radius:1.4px;"></div>
<div class="r" style="left:1006.5px;top:680.7px;width:19.6px;height:19.6px;border-radius:50%;background:radial-gradient(circle at 50% 50%, rgba(0,0,0,0) 62%, rgba(0,0,0,0.6) 100%), linear-gradient(#fbfbfb 6%, #cfcfcf 38%, #a0a0a0 70%, #7c7c7c 100%);"></div>
<div class="r" style="left:1221.8px;top:492.5px;width:7.2px;height:148.5px;background:#a6a6a6;border-radius:3.6px;"></div>
<!-- icons -->
<svg class="r" style="left:0;top:0" width="1859" height="41" viewBox="0 0 1859 41">
<rect x="1574.1" y="6.9" width="27.9" height="19.9" fill="none" stroke="#fff" stroke-width="2"/>
<rect x="1574" y="10.8" width="28" height="2" fill="#fff"/>
<rect x="1590.3" y="8.2" width="1.9" height="1.8" fill="#fff"/>
<rect x="1594.2" y="8.2" width="1.9" height="1.8" fill="#fff"/>
<rect x="1598.1" y="8.2" width="1.9" height="1.8" fill="#fff"/>
<circle cx="1655.5" cy="6.1" r="4" fill="none" stroke="#f4f4f4" stroke-width="1.6"/>
<path d="M1651.2 13.6 H1659.6 V28.6 H1662.6 V31.2 H1650.8 V28.6 H1654.9 V16.4 H1651.2 Z" fill="none" stroke="#f4f4f4" stroke-width="1.5" stroke-linejoin="round"/>
<path d="M1723.89 3.22 L1727.51 3.22 L1728.08 6.78 L1731.03 8.00 L1733.95 5.89 L1736.51 8.45 L1734.40 11.37 L1735.62 14.32 L1739.18 14.89 L1739.18 18.51 L1735.62 19.08 L1734.40 22.03 L1736.51 24.95 L1733.95 27.51 L1731.03 25.40 L1728.08 26.62 L1727.51 30.18 L1723.89 30.18 L1723.32 26.62 L1720.37 25.40 L1717.45 27.51 L1714.89 24.95 L1717.00 22.03 L1715.78 19.08 L1712.22 18.51 L1712.22 14.89 L1715.78 14.32 L1717.00 11.37 L1714.89 8.45 L1717.45 5.89 L1720.37 8.00 L1723.32 6.78 Z" fill="none" stroke="#fff" stroke-width="2.1" stroke-linejoin="round"/>
<circle cx="1725.7" cy="16.7" r="4.1" fill="none" stroke="#fff" stroke-width="2"/>
<path d="M1779.6 2 L1808.4 16.8 L1779.6 31.7 Z" fill="#2a6aa2"/>
<path d="M1818.7 2 L1848 16.8 L1818.7 31.7 Z" fill="#4e7b52"/>
<rect x="1857" y="5" width="2" height="2.5" fill="#c06020"/>
<rect x="1857" y="26" width="2" height="2.5" fill="#c06020"/>
</svg>
<svg class="r" style="left:1840.5px;top:47.5px" width="20" height="18"><path d="M0.8 0.8 H18.5 L9.6 16.2 Z" fill="none" stroke="#d6e4f4" stroke-width="1.2"/></svg>
<svg class="r" style="left:1840.5px;top:468px" width="20" height="18"><path d="M0.8 0.8 H18.5 L9.6 16.2 Z" fill="none" stroke="#d6e4f4" stroke-width="1.2"/></svg>
<svg class="r" style="left:1840.5px;top:760.5px" width="20" height="18"><path d="M0.8 0.8 H18.5 L9.6 16.2 Z" fill="none" stroke="#d6e4f4" stroke-width="1.2"/></svg>
<!-- text -->
<span class="t" style="font-size:22px;color:#ffffff;font-style:italic;left:5.70px;top:7.98px;transform:scaleX(0.9907);">FC0013</span>
<span class="t" style="font-size:22px;color:#ffffff;left:900.27px;top:44.28px;transform:scaleX(1.0266);">Frontend</span>
<span class="t dg" style="font-size:52.3px;color:#f6f615;left:15.16px;top:96.83px;transform:scaleX(0.8692);">0</span>
<span class="t dg" style="font-size:52.3px;color:#f6f615;left:69.52px;top:96.83px;transform:scaleX(0.5917);">1</span>
<span class="t dg" style="font-size:52.3px;color:#f6f615;left:98.08px;top:96.83px;transform:scaleX(0.9080);">8</span>
<span class="t dg" style="font-size:52.3px;color:#f6f615;left:129.39px;top:96.83px;transform:scaleX(0.8077);">3</span>
<span class="t dg" style="font-size:52.3px;color:#f6f615;left:185.86px;top:96.83px;transform:scaleX(0.8720);">6</span>
<span class="t dg" style="font-size:52.3px;color:#f6f615;left:215.35px;top:96.83px;transform:scaleX(0.8519);">4</span>
<span class="t dg" style="font-size:52.3px;color:#f6f615;left:244.02px;top:96.83px;transform:scaleX(0.8880);">8</span>
<span class="t dg" style="font-size:52.3px;color:#f6f615;left:292.89px;top:96.83px;transform:scaleX(0.8538);">0</span>
<span class="t dg" style="font-size:52.3px;color:#f6f615;left:322.86px;top:96.83px;transform:scaleX(0.8692);">0</span>
<span class="t dg" style="font-size:52.3px;color:#f6f615;left:352.79px;top:96.83px;transform:scaleX(0.8538);">0</span>
<span class="t dg" style="font-size:52.3px;color:#f6f615;left:395.55px;top:96.83px;transform:scaleX(0.7867);">H</span>
<span class="t dg" style="font-size:52.3px;color:#f6f615;left:428.96px;top:96.83px;transform:scaleX(1.0682);">z</span>
<span class="t" style="font-size:22px;color:#f01414;left:13.00px;top:181.38px;transform:scaleX(1.0376);">43 ppm Correction</span>
<span class="t" style="font-size:26px;color:#d2d2d2;left:23.01px;top:240.99px;transform:scaleX(0.9917);">Connection</span>
<span class="t" style="font-size:26px;color:#d2d2d2;left:190.92px;top:240.99px;transform:scaleX(0.9423);">Recorder</span>
<span class="t" style="font-size:26px;color:#ffffff;left:329.18px;top:240.99px;transform:scaleX(0.9107);">FC0013</span>
<span class="t" style="font-size:25px;color:#ffffff;left:22.60px;top:299.24px;transform:scaleX(0.9460);">AGC</span>
<span class="t" style="font-size:25px;color:#ffffff;left:187.98px;top:301.64px;transform:scaleX(1.0244);">On/Off</span>
<span class="t" style="font-size:25px;color:#ffffff;left:21.56px;top:357.84px;transform:scaleX(1.0353);">Gain</span>
<span class="t" style="font-size:18.2px;color:#ffffff;left:589.10px;top:90.19px;transform:scaleX(0.9011);">Freeze</span>
<span class="t" style="font-size:18.2px;color:#ffffff;left:696.70px;top:90.19px;transform:scaleX(0.9655);">Gradient</span>
<span class="t" style="font-size:18.2px;color:#ffffff;left:571.70px;top:151.89px;transform:scaleX(0.9789);">Smoothing Level</span>
<span class="t" style="font-size:18.2px;color:#ffffff;left:571.70px;top:247.89px;transform:scaleX(0.9694);">Zoom X</span>
<span class="t" style="font-size:18.2px;color:#ffffff;left:571.70px;top:337.89px;transform:scaleX(0.9537);">Zoom Y</span>
<span class="t" style="font-size:19.8px;color:#ffffff;left:924.70px;top:84.74px;">40.0</span>
<span class="t" style="font-size:19.8px;color:#ffffff;left:924.70px;top:129.54px;">20.0</span>
<span class="t" style="font-size:19.8px;color:#ffffff;left:935.70px;top:174.34px;">0.0</span>
<span class="t" style="font-size:19.8px;color:#ffffff;left:918.11px;top:219.14px;">-20.0</span>
<span class="t" style="font-size:19.8px;color:#ffffff;left:918.11px;top:263.94px;">-40.0</span>
<span class="t" style="font-size:19.8px;color:#ffffff;left:918.11px;top:308.74px;">-60.0</span>
<span class="t" style="font-size:20px;color:#ffffff;left:1026.04px;top:324.87px;">182.8</span>
<span class="t" style="font-size:20px;color:#ffffff;left:1116.88px;top:324.87px;">183</span>
<span class="t" style="font-size:20px;color:#ffffff;left:1191.04px;top:324.87px;">183.2</span>
<span class="t" style="font-size:20px;color:#ffffff;left:1273.54px;top:324.87px;">183.4</span>
<span class="t" style="font-size:20px;color:#ffffff;left:1356.04px;top:324.87px;">183.6</span>
<span class="t" style="font-size:20px;color:#ffffff;left:1438.54px;top:324.87px;">183.8</span>
<span class="t" style="font-size:20px;color:#ffffff;left:1529.38px;top:324.87px;">184</span>
<span class="t" style="font-size:20px;color:#ffffff;left:1603.54px;top:324.87px;">184.2</span>
<span class="t" style="font-size:20px;color:#ffffff;left:1686.04px;top:324.87px;">184.4</span>
<span class="t" style="font-size:20px;color:#ffffff;left:1768.54px;top:324.87px;">184.6</span>
<span class="t" style="font-size:21px;color:#ffffff;left:1309.57px;top:354.42px;transform:scaleX(1.1267);">Frequency (MHz)</span>
<span class="t" style="font-size:24px;color:#ffffff;left:882.30px;top:264.00px;transform-origin:0 20.32px;transform:rotate(-90deg) scaleX(0.9791);">Magnitude (dB)</span>
<span class="t" style="font-size:19.3px;color:#ffffff;left:39.20px;top:421.96px;transform:scaleX(0.8934);">6B</span>
<span class="t" style="font-size:23.4px;color:#f7c566;left:164.53px;top:422.09px;transform:scaleX(0.9651);">EId: 1135</span>
<span class="t" style="font-size:23.4px;color:#f2f020;left:291.43px;top:422.09px;transform:scaleX(0.9715);">MDR S-ANHALT</span>
<span class="t" style="font-size:23.4px;color:#ffffff;left:489.97px;top:422.09px;transform:scaleX(1.0269);">2021-12-17</span>
<span class="t" style="font-size:23.4px;color:#ffffff;left:626.84px;top:422.09px;transform:scaleX(0.9634);">15:44:32 Z</span>
<span class="t" style="font-size:19.7px;color:#ffffff;left:1797.50px;top:419.32px;transform:scaleX(0.9047);">DAB</span>
<span class="t" style="font-size:28.6px;color:#f4f41c;left:4.98px;top:471.09px;transform:scaleX(1.0123);">No Service Selected</span>
<span class="t" style="font-size:23px;color:#ffffff;left:7.26px;top:523.03px;transform:scaleX(0.9442);">MDR AKTUELL</span>
<span class="t" style="font-size:23px;color:#ffffff;left:7.22px;top:561.03px;transform:scaleX(0.9780);">MDR JUMP</span>
<span class="t" style="font-size:23px;color:#ffffff;left:7.26px;top:599.03px;transform:scaleX(0.9435);">MDR KLASSIK</span>
<span class="t" style="font-size:23px;color:#ffffff;left:7.24px;top:637.03px;transform:scaleX(0.9616);">MDR KULTUR</span>
<span class="t" style="font-size:23px;color:#ffffff;left:7.22px;top:675.03px;transform:scaleX(0.9822);">MDR S-ANHALT DE</span>
<span class="t" style="font-size:23px;color:#ffffff;left:7.21px;top:713.03px;transform:scaleX(0.9917);">MDR S-ANHALT HAL</span>
<span class="t" style="font-size:23px;color:#ffffff;left:7.19px;top:751.03px;transform:scaleX(1.0092);">MDR S-ANHALT MD</span>
<span class="t" style="font-size:23px;color:#ffffff;left:7.22px;top:789.03px;transform:scaleX(0.9758);">MDR S-ANHALT SDL</span>
<span class="t" style="font-size:23px;color:#ffffff;left:7.22px;top:827.03px;transform:scaleX(0.9797);">MDR SchlagerW ST</span>
<span class="t" style="font-size:23px;color:#ffffff;left:7.25px;top:865.03px;transform:scaleX(0.9538);">MDR SPUTNIK</span>
<span class="t" style="font-size:23px;color:#ffffff;left:7.25px;top:903.03px;transform:scaleX(0.9485);">MDR TWEENS</span>
<span class="t" style="font-size:28.6px;color:#ffffff;left:305.39px;top:471.09px;transform:scaleX(1.0115);">Service Quality</span>
<span class="t" style="font-size:20.5px;color:#ffffff;left:313.40px;top:537.85px;transform:scaleX(0.9369);">SNR (dB)</span>
<span class="t" style="font-size:20.5px;color:#ffffff;left:313.25px;top:584.05px;transform:scaleX(0.9509);">FIC (ok %)</span>
<span class="t" style="font-size:20.5px;color:#ffffff;left:313.26px;top:630.25px;transform:scaleX(0.9435);">RS (ok %)</span>
<span class="t" style="font-size:20.5px;color:#ffffff;left:313.17px;top:676.45px;transform:scaleX(1.0277);">Null Symbol</span>
<span class="t" style="font-size:20.5px;color:#ffffff;left:313.40px;top:722.65px;transform:scaleX(0.9943);">SymbolTime (ms)</span>
<span class="t" style="font-size:20.5px;color:#ffffff;left:312.42px;top:768.85px;transform:scaleX(0.9847);">FrameTime (ms)</span>
<span class="t" style="font-size:17px;color:#f0f0f0;left:507.03px;top:539.11px;transform:scaleX(0.9737);">10,3</span>
<span class="t" style="font-size:17px;color:#ffffff;left:508.37px;top:585.61px;transform:scaleX(1.0257);">100</span>
<span class="t" style="font-size:17px;color:#f0f0f0;left:506.00px;top:723.11px;transform:scaleX(1.0113);">0,36</span>
<span class="t" style="font-size:17px;color:#ffffff;left:506.50px;top:770.61px;transform:scaleX(0.9959);">95,8</span>
<span class="t" style="font-size:26px;color:#d8d8d8;left:654.70px;top:481.59px;transform:scaleX(0.8978);">AAC</span>
<span class="t" style="font-size:26px;color:#d8d8d8;left:837.80px;top:481.59px;">Options</span>
<span class="t" style="font-size:26px;color:#d8d8d8;left:629.59px;top:530.19px;transform:scaleX(0.9067);">Sync</span>
<span class="t" style="font-size:26px;color:#ffffff;left:770.20px;top:530.19px;transform:scaleX(0.9180);">TII</span>
<span class="t" style="font-size:26px;color:#d8d8d8;left:885.40px;top:530.19px;transform:scaleX(0.9934);">Audio</span>
<span class="t" style="font-size:22.2px;color:#ffffff;left:596.59px;top:635.61px;transform:scaleX(1.0058);">Pattern</span>
<span class="t" style="font-size:22.2px;color:#ffffff;left:696.94px;top:635.61px;transform:scaleX(1.0583);">MainId</span>
<span class="t" style="font-size:22.2px;color:#ffffff;left:795.99px;top:635.61px;transform:scaleX(1.0064);">SubId</span>
<span class="t" style="font-size:22.2px;color:#ffffff;left:882.97px;top:635.61px;transform:scaleX(1.0302);">Strength</span>
<span class="t" style="font-size:19.5px;color:#ffffff;left:599.40px;top:681.29px;transform:scaleX(1.0108);">0x95</span>
<span class="t" style="font-size:19.5px;color:#ffffff;left:700.40px;top:681.29px;transform:scaleX(1.0346);">40</span>
<span class="t" style="font-size:19.5px;color:#ffffff;left:798.70px;top:681.29px;transform:scaleX(1.0636);">4</span>
<span class="t" style="font-size:19.5px;color:#ffffff;left:886.80px;top:681.29px;transform:scaleX(0.9762);">0.85</span>
<span class="t" style="font-size:19.5px;color:#ffffff;left:599.40px;top:718.94px;transform:scaleX(1.0108);">0x95</span>
<span class="t" style="font-size:19.5px;color:#ffffff;left:700.40px;top:718.94px;transform:scaleX(1.0346);">40</span>
<span class="t" style="font-size:19.5px;color:#ffffff;left:799.61px;top:718.94px;transform:scaleX(0.8889);">1</span>
<span class="t" style="font-size:19.5px;color:#ffffff;left:886.80px;top:718.94px;">0.29</span>
<span class="t" style="font-size:19.5px;color:#ffffff;left:599.40px;top:756.59px;transform:scaleX(1.0108);">0x95</span>
<span class="t" style="font-size:19.5px;color:#ffffff;left:700.40px;top:756.59px;transform:scaleX(1.0346);">40</span>
<span class="t" style="font-size:19.5px;color:#ffffff;left:798.70px;top:756.59px;transform:scaleX(1.1700);">3</span>
<span class="t" style="font-size:19.5px;color:#ffffff;left:886.80px;top:756.59px;">0.13</span>
<span class="t" style="font-size:22.4px;color:#ffffff;left:1281.45px;top:464.64px;transform:scaleX(0.9535);">Channel Impulse Response (CIR)</span>
<span class="t" style="font-size:18.2px;color:#ffffff;left:1031.09px;top:510.09px;transform:scaleX(0.9119);">Freeze</span>
<span class="t" style="font-size:18.2px;color:#ffffff;left:1138.30px;top:510.09px;transform:scaleX(0.9856);">Gradient</span>
<span class="t" style="font-size:18.2px;color:#ffffff;left:1013.80px;top:572.39px;transform:scaleX(0.9833);">Smoothing Level</span>
<span class="t" style="font-size:18.2px;color:#ffffff;left:1013.80px;top:653.39px;transform:scaleX(0.9741);">Zoom X</span>
<span class="t" style="font-size:18.2px;color:#ffffff;left:1013.80px;top:727.89px;transform:scaleX(0.9584);">Zoom Y</span>
<span class="t" style="font-size:20.4px;color:#ffffff;left:1282.30px;top:637.46px;transform-origin:0 17.27px;transform:rotate(-90deg) scaleX(0.9693);">Magnitude (dB)</span>
<span class="t" style="font-size:19.4px;color:#ffffff;left:1307.59px;top:503.18px;">-10.0</span>
<span class="t" style="font-size:19.4px;color:#ffffff;left:1307.59px;top:533.45px;">-20.0</span>
<span class="t" style="font-size:19.4px;color:#ffffff;left:1307.59px;top:563.72px;">-30.0</span>
<span class="t" style="font-size:19.4px;color:#ffffff;left:1307.59px;top:593.99px;">-40.0</span>
<span class="t" style="font-size:19.4px;color:#ffffff;left:1307.59px;top:624.26px;">-50.0</span>
<span class="t" style="font-size:19.4px;color:#ffffff;left:1307.59px;top:654.53px;">-60.0</span>
<span class="t" style="font-size:15.2px;color:#ffffff;left:1372.75px;top:668.83px;">-60</span>
<span class="t" style="font-size:15.2px;color:#ffffff;left:1404.90px;top:689.83px;">-40</span>
<span class="t" style="font-size:15.2px;color:#ffffff;left:1437.05px;top:668.83px;">-20</span>
<span class="t" style="font-size:15.2px;color:#ffffff;left:1477.95px;top:689.83px;">0</span>
<span class="t" style="font-size:15.2px;color:#ffffff;left:1505.88px;top:668.83px;">20</span>
<span class="t" style="font-size:15.2px;color:#ffffff;left:1538.03px;top:689.83px;">40</span>
<span class="t" style="font-size:15.2px;color:#ffffff;left:1570.18px;top:668.83px;">60</span>
<span class="t" style="font-size:15.2px;color:#ffffff;left:1602.33px;top:689.83px;">80</span>
<span class="t" style="font-size:15.2px;color:#ffffff;left:1629.75px;top:668.83px;">100</span>
<span class="t" style="font-size:15.2px;color:#ffffff;left:1661.90px;top:689.83px;">120</span>
<span class="t" style="font-size:15.2px;color:#ffffff;left:1694.05px;top:668.83px;">140</span>
<span class="t" style="font-size:15.2px;color:#ffffff;left:1726.20px;top:689.83px;">160</span>
<span class="t" style="font-size:15.2px;color:#ffffff;left:1758.35px;top:668.83px;">180</span>
<span class="t" style="font-size:15.2px;color:#ffffff;left:1791.00px;top:689.83px;">200</span>
<span class="t" style="font-size:15.2px;color:#ffffff;left:1823.15px;top:668.83px;">220</span>
<span class="t" style="font-size:19.6px;color:#ffffff;left:1492.47px;top:715.21px;transform:scaleX(1.0285);">Distance Difference (km)</span>
<span class="t" style="font-size:22px;color:#ffffff;left:1390.30px;top:756.38px;transform:scaleX(0.9445);">TII Carriers</span>
<span class="t" style="font-size:19.5px;color:#ffffff;left:1065.54px;top:794.19px;">1.0</span>
<span class="t" style="font-size:19.5px;color:#ffffff;left:1066.54px;top:827.99px;">0.8</span>
<span class="t" style="font-size:19.5px;color:#ffffff;left:1066.54px;top:861.79px;">0.6</span>
<span class="t" style="font-size:19.5px;color:#ffffff;left:1065.54px;top:895.59px;">0.4</span>
<span class="t" style="font-size:19.5px;color:#ffffff;left:1066.54px;top:929.39px;">0.2</span>
<span class="t" style="font-size:19.5px;color:#ffffff;left:1065.54px;top:963.19px;">0.0</span>
<span class="t" style="font-size:19.6px;color:#ffffff;left:1044.20px;top:915.61px;transform-origin:0 16.59px;transform:rotate(-90deg) scaleX(1.0011);">Magnitude</span>
<div class="r" style="left:0;top:400px;width:319.8px;height:60px;overflow:hidden"><div class="r" style="left:0;top:-400px;width:400px;height:975px"><span class="t" style="font-size:23.4px;color:#f7c81c;left:291.43px;top:422.09px;transform:scaleX(0.9715);">MDR S-ANHALT</span></div></div>
</div></body></html>
